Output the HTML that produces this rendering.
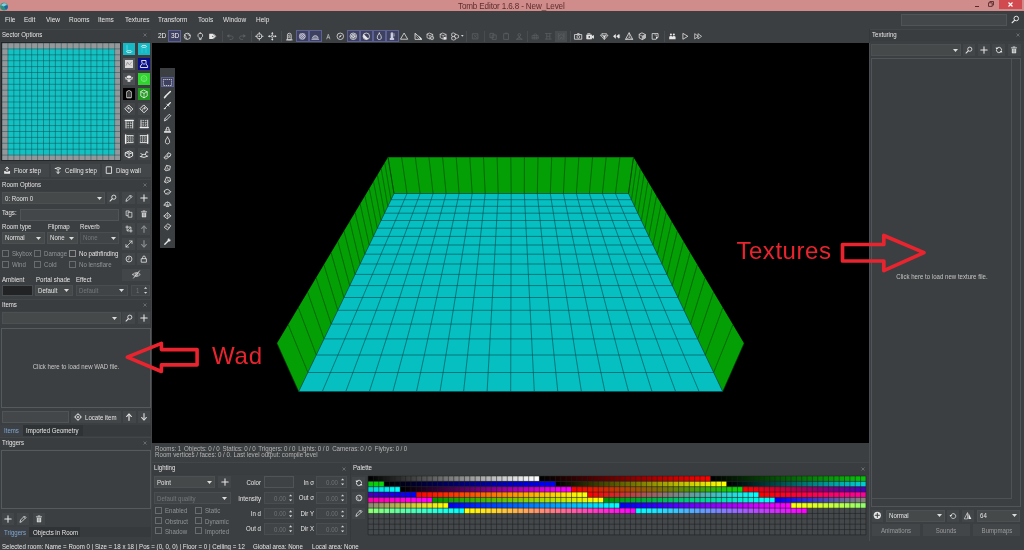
<!DOCTYPE html><html><head><meta charset="utf-8"><title>Tomb Editor</title><style>
*{box-sizing:border-box;margin:0;padding:0}
html,body{width:1024px;height:550px;overflow:hidden;background:#3c3f41;font-family:"Liberation Sans",sans-serif;font-size:6.6px;color:#e4e4e4}
.a{position:absolute}
.t{position:absolute;white-space:nowrap;line-height:1;transform:scaleX(0.925);transform-origin:0 50%}
.tc{transform-origin:50% 50%}
.tr{transform-origin:100% 50%}
.ns{transform:none}
.dis{color:#8c8c8c}
.hdr{position:absolute;background:#3a3d3f;border-top:1px solid #434648;border-bottom:1px solid #393c3e}
.btn{position:absolute;background:#424648;}
.inp{position:absolute;background:#43474a;border:1px solid #505456}
.cmb{position:absolute;background:#45494a;border:1px solid #4c5052}
.inpd{position:absolute;background:#414446;border:1px solid #494d4f}
.lst{position:absolute;background:#3c3f41;border:1px solid #555a5c}
.cb{position:absolute;width:7px;height:7px;border:1px solid #8a8a8a;background:#3c3f41}
.cbd{position:absolute;width:7px;height:7px;border:1px solid #686c6e;background:#3c3f41}
svg{position:absolute;overflow:visible}
#root{position:absolute;left:0;top:0;width:1024px;height:550px;will-change:transform}
</style></head><body><div id="root">
<div class="a" style="left:0px;top:0px;width:1024px;height:11.3px;background:#d08c8b;"></div>
<div class="t " style="left:457.6px;top:1.879174324324325px;font-size:8.76px;color:#5c2c2c;letter-spacing:-0.15px">Tomb Editor 1.6.8 - New_Level</div>
<svg style="left:0;top:1.5px" width="9" height="9" viewBox="0 0 9 9"><circle cx="4" cy="4.6" r="3.8" fill="#2a8f7a"/><path d="M1 3.2A3.8 3.8 0 0 1 7 2.2L4 4.6Z" fill="#7fd0e8"/><path d="M4 4.6L7.6 3.4A3.8 3.8 0 0 1 6 7.8Z" fill="#1f5fa8"/></svg>
<div class="a" style="left:0px;top:11.5px;width:1024px;height:17px;background:#3c3f41;"></div>
<div class="t " style="left:4.6px;top:16.042547297297297px;font-size:7.03px;">File</div>
<div class="t " style="left:24.2px;top:16.042547297297297px;font-size:7.03px;">Edit</div>
<div class="t " style="left:45.5px;top:16.042547297297297px;font-size:7.03px;">View</div>
<div class="t " style="left:68.7px;top:16.042547297297297px;font-size:7.03px;">Rooms</div>
<div class="t " style="left:98.2px;top:16.042547297297297px;font-size:7.03px;">Items</div>
<div class="t " style="left:124.7px;top:16.042547297297297px;font-size:7.03px;">Textures</div>
<div class="t " style="left:158px;top:16.042547297297297px;font-size:7.03px;">Transform</div>
<div class="t " style="left:197.5px;top:16.042547297297297px;font-size:7.03px;">Tools</div>
<div class="t " style="left:223.2px;top:16.042547297297297px;font-size:7.03px;">Window</div>
<div class="t " style="left:256.3px;top:16.042547297297297px;font-size:7.03px;">Help</div>
<div class="a" style="left:152px;top:43.3px;width:716.9px;height:399.3px;background:#000;"></div>
<svg style="left:0;top:0" width="1024" height="550" viewBox="0 0 1024 550">
<polygon points="388.0,157.2 633.5,157.2 628.5,193.5 394.0,193.5" fill="#049f05"/>
<polygon points="277.0,343.3 388.0,157.2 394.0,193.5 298.7,391.5" fill="#049f05"/>
<polygon points="744.0,343.3 633.5,157.2 628.5,193.5 722.7,391.5" fill="#049f05"/>
<polygon points="298.7,391.5 722.7,391.5 628.5,193.5 394.0,193.5" fill="#06bfc1"/>
<path d="M298.7 391.5L722.7 391.5M307.9 372.5L713.6 372.5M316.3 355.0L705.3 355.0M324.0 338.9L697.7 338.9M331.2 324.1L690.6 324.1M337.8 310.3L684.1 310.3M343.9 297.5L678.0 297.5M349.7 285.6L672.3 285.6M355.0 274.4L667.0 274.4M360.1 264.0L662.0 264.0M364.8 254.2L657.4 254.2M369.2 245.0L653.0 245.0M373.4 236.4L648.9 236.4M377.3 228.2L645.0 228.2M381.0 220.5L641.4 220.5M384.5 213.2L637.9 213.2M387.8 206.3L634.6 206.3M391.0 199.7L631.5 199.7M394.0 193.5L628.5 193.5M298.7 391.5L394.0 193.5M322.3 391.5L407.0 193.5M345.8 391.5L420.1 193.5M369.4 391.5L433.1 193.5M392.9 391.5L446.1 193.5M416.5 391.5L459.1 193.5M440.0 391.5L472.2 193.5M463.6 391.5L485.2 193.5M487.1 391.5L498.2 193.5M510.7 391.5L511.2 193.5M534.3 391.5L524.3 193.5M557.8 391.5L537.3 193.5M581.4 391.5L550.3 193.5M604.9 391.5L563.4 193.5M628.5 391.5L576.4 193.5M652.0 391.5L589.4 193.5M675.6 391.5L602.4 193.5M699.1 391.5L615.5 193.5M722.7 391.5L628.5 193.5" stroke="#05484e" stroke-width="0.6" fill="none"/>
<path d="M394.0 193.5L388.0 157.2M407.0 193.5L401.6 157.2M420.1 193.5L415.3 157.2M433.1 193.5L428.9 157.2M446.1 193.5L442.6 157.2M459.1 193.5L456.2 157.2M472.2 193.5L469.8 157.2M485.2 193.5L483.5 157.2M498.2 193.5L497.1 157.2M511.2 193.5L510.8 157.2M524.3 193.5L524.4 157.2M537.3 193.5L538.0 157.2M550.3 193.5L551.7 157.2M563.4 193.5L565.3 157.2M576.4 193.5L578.9 157.2M589.4 193.5L592.6 157.2M602.4 193.5L606.2 157.2M615.5 193.5L619.9 157.2M628.5 193.5L633.5 157.2M298.7 391.5L277.0 343.3M722.7 391.5L744.0 343.3M307.9 372.5L288.2 324.6M713.6 372.5L732.9 324.6M316.3 355.0L298.3 307.5M705.3 355.0L722.8 307.5M324.0 338.9L307.6 292.0M697.7 338.9L713.5 292.0M331.2 324.1L316.1 277.8M690.6 324.1L705.1 277.8M337.8 310.3L323.9 264.7M684.1 310.3L697.3 264.7M343.9 297.5L331.1 252.6M678.0 297.5L690.1 252.6M349.7 285.6L337.8 241.4M672.3 285.6L683.5 241.4M355.0 274.4L344.0 231.0M667.0 274.4L677.3 231.0M360.1 264.0L349.8 221.3M662.0 264.0L671.6 221.3M364.8 254.2L355.1 212.3M657.4 254.2L666.2 212.3M369.2 245.0L360.2 203.9M653.0 245.0L661.2 203.9M373.4 236.4L364.9 195.9M648.9 236.4L656.5 195.9M377.3 228.2L369.3 188.5M645.0 228.2L652.1 188.5M381.0 220.5L373.5 181.5M641.4 220.5L647.9 181.5M384.5 213.2L377.4 174.9M637.9 213.2L644.0 174.9M387.8 206.3L381.2 168.7M634.6 206.3L640.3 168.7M391.0 199.7L384.7 162.8M631.5 199.7L636.8 162.8M394.0 193.5L388.0 157.2M628.5 193.5L633.5 157.2" stroke="#034406" stroke-width="0.6" fill="none"/>
</svg>
<div class="a" style="left:0px;top:29px;width:151px;height:512px;background:#3c3f41;"></div>
<div class="a" style="left:150.8px;top:43px;width:1.2px;height:498px;background:#424547;"></div>
<div class="hdr" style="left:0px;top:29px;width:151px;height:12px"></div>
<div class="t " style="left:2px;top:31.8px;">Sector Options</div>
<svg style="left:143px;top:33.0px" width="4" height="4" viewBox="0 0 4 4"><path d="M0.5 0.5L3.5 3.5M3.5 0.5L0.5 3.5" stroke="#7a7e80" stroke-width="0.7"/></svg>
<div class="a" style="left:1.0px;top:42.2px;width:119.69999999999999px;height:118.5px;background:#232526;"></div>
<svg style="left:1.8px;top:43px;overflow:hidden" width="118.1" height="116.9" viewBox="0 0 118.1 116.9"><rect x="0" y="0" width="118.60" height="118.00" fill="#95989b"/><rect x="5.93" y="5.90" width="106.74" height="106.20" fill="#14c1c2"/><path d="M0.00 0V118.00M0 0.00H118.60M5.93 0V118.00M0 5.90H118.60M11.86 0V118.00M0 11.80H118.60M17.79 0V118.00M0 17.70H118.60M23.72 0V118.00M0 23.60H118.60M29.65 0V118.00M0 29.50H118.60M35.58 0V118.00M0 35.40H118.60M41.51 0V118.00M0 41.30H118.60M47.44 0V118.00M0 47.20H118.60M53.37 0V118.00M0 53.10H118.60M59.30 0V118.00M0 59.00H118.60M65.23 0V118.00M0 64.90H118.60M71.16 0V118.00M0 70.80H118.60M77.09 0V118.00M0 76.70H118.60M83.02 0V118.00M0 82.60H118.60M88.95 0V118.00M0 88.50H118.60M94.88 0V118.00M0 94.40H118.60M100.81 0V118.00M0 100.30H118.60M106.74 0V118.00M0 106.20H118.60M112.67 0V118.00M0 112.10H118.60M118.60 0V118.00M0 118.00H118.60" stroke="#0c3c42" stroke-width="0.5" fill="none" opacity="0.85"/></svg>
<div class="a" style="left:123px;top:43px;width:12px;height:12px;background:#17b9c4;"></div>
<div class="a" style="left:138px;top:43px;width:12px;height:12px;background:#17b9c4;"></div>
<div class="a" style="left:123px;top:58px;width:12px;height:12px;background:#55595b;"></div>
<div class="a" style="left:138px;top:58px;width:12px;height:12px;background:#0a0f8c;"></div>
<div class="a" style="left:123px;top:73.2px;width:12px;height:12px;background:#4c5052;"></div>
<div class="a" style="left:138px;top:73.2px;width:12px;height:12px;background:#2fd42f;"></div>
<div class="a" style="left:123px;top:88px;width:12px;height:12px;background:#000;"></div>
<div class="a" style="left:138px;top:88px;width:12px;height:12px;background:#1f9a1f;"></div>
<div class="a" style="left:123px;top:103px;width:12px;height:12px;background:#424648;"></div>
<div class="a" style="left:138px;top:103px;width:12px;height:12px;background:#424648;"></div>
<div class="a" style="left:123px;top:118px;width:12px;height:12px;background:#424648;"></div>
<div class="a" style="left:138px;top:118px;width:12px;height:12px;background:#424648;"></div>
<div class="a" style="left:123px;top:133px;width:12px;height:12px;background:#424648;"></div>
<div class="a" style="left:138px;top:133px;width:12px;height:12px;background:#424648;"></div>
<div class="a" style="left:123px;top:148px;width:12px;height:12px;background:#424648;"></div>
<div class="a" style="left:138px;top:148px;width:12px;height:12px;background:#424648;"></div>
<svg style="left:123px;top:43px" width="12" height="12" viewBox="0 0 12 12"><path d="M4 2.2V8.4" stroke="#8eeef4" stroke-width="0.55" fill="none" stroke-linecap="round" stroke-linejoin="round"/><ellipse cx="6.2" cy="8.6" rx="2.6" ry="1" stroke="#f0f0f0" stroke-width="0.8" fill="none"/></svg>
<svg style="left:138px;top:43px" width="12" height="12" viewBox="0 0 12 12"><ellipse cx="6" cy="3.4" rx="2.6" ry="1" stroke="#f0f0f0" stroke-width="0.8" fill="none"/><path d="M4 4.6V9.4M8 4.6V9.4" stroke="#55dde8" stroke-width="0.45" fill="none" stroke-linecap="round" stroke-linejoin="round"/></svg>
<svg style="left:123px;top:58px" width="12" height="12" viewBox="0 0 12 12"><rect x="2" y="2" width="8" height="8" fill="#dadada"/><path d="M3 7.5L4.6 4.2L6.4 6.8L8.6 4" stroke="#777" stroke-width="0.55" fill="none" stroke-linecap="round" stroke-linejoin="round"/><path d="M3 5L8.6 7.6" stroke="#999" stroke-width="0.4" fill="none" stroke-linecap="round" stroke-linejoin="round"/></svg>
<svg style="left:138px;top:58px" width="12" height="12" viewBox="0 0 12 12"><path d="M4 2.5H8V6L9.6 8V9.5H2.4V8L4 6Z" stroke="#f0f0f0" stroke-width="0.9" fill="none" stroke-linecap="round" stroke-linejoin="round"/><path d="M5.3 6.5L6 5.2L6.7 6.5" stroke="#f0f0f0" stroke-width="0.6" fill="none" stroke-linecap="round" stroke-linejoin="round"/></svg>
<svg style="left:123px;top:73.2px" width="12" height="12" viewBox="0 0 12 12"><path d="M6 2.4C3.6 2.4 3.2 4.4 3.6 6L4.6 7V8.8H7.4V7L8.4 6C8.8 4.4 8.4 2.4 6 2.4Z" fill="#f0f0f0"/><circle cx="4.9" cy="5.4" r="0.75" fill="#4c5052"/><circle cx="7.1" cy="5.4" r="0.75" fill="#4c5052"/><path d="M6 6.4V7.2" stroke="#4c5052" stroke-width="0.5" fill="none" stroke-linecap="round" stroke-linejoin="round"/><path d="M2.4 4.4L3.2 6.6M9.6 4.4L8.8 6.6" stroke="#f0f0f0" stroke-width="0.7" fill="none" stroke-linecap="round" stroke-linejoin="round"/></svg>
<svg style="left:138px;top:73.2px" width="12" height="12" viewBox="0 0 12 12"><circle cx="6" cy="5.6" r="2.9" stroke="#8ff08f" stroke-width="0.7" fill="none"/><path d="M4.6 5.2Q6 3.8 7.4 5.2M5 7Q6 7.8 7 7" stroke="#8ff08f" stroke-width="0.5" fill="none" stroke-linecap="round" stroke-linejoin="round"/></svg>
<svg style="left:123px;top:88px" width="12" height="12" viewBox="0 0 12 12"><path d="M3.8 9.4V3.6Q6 1.6 8.2 3.6V9.4Z" stroke="#f0f0f0" stroke-width="0.9" fill="none" stroke-linecap="round" stroke-linejoin="round"/><path d="M6 4.5V9.2" stroke="#f0f0f0" stroke-width="0.6" fill="none" stroke-linecap="round" stroke-linejoin="round"/></svg>
<svg style="left:138px;top:88px" width="12" height="12" viewBox="0 0 12 12"><path d="M6 2.2L9.2 3.8V8L6 9.8L2.8 8V3.8Z" stroke="#f0f0f0" stroke-width="0.8" fill="none" stroke-linecap="round" stroke-linejoin="round"/><path d="M2.8 3.8L6 5.4L9.2 3.8M6 5.4V9.8" stroke="#f0f0f0" stroke-width="0.7" fill="none" stroke-linecap="round" stroke-linejoin="round"/></svg>
<svg style="left:123px;top:103px" width="12" height="12" viewBox="0 0 12 12"><path d="M6 2.2L9.8 6L6 9.8L2.2 6Z" stroke="#f0f0f0" stroke-width="0.9" fill="none" stroke-linecap="round" stroke-linejoin="round"/><path d="M7.3 7.2V6.2Q7.3 5.2 6.3 5.2H4.9M5.7 4.3L4.7 5.2L5.7 6.1" stroke="#f0f0f0" stroke-width="0.75" fill="none" stroke-linecap="round" stroke-linejoin="round"/></svg>
<svg style="left:138px;top:103px" width="12" height="12" viewBox="0 0 12 12"><path d="M6 2.2L9.8 6L6 9.8L2.2 6Z" stroke="#f0f0f0" stroke-width="0.9" fill="none" stroke-linecap="round" stroke-linejoin="round"/><path d="M4.7 7.2V6.2Q4.7 5.2 5.7 5.2H7.1M6.3 4.3L7.3 5.2L6.3 6.1" stroke="#f0f0f0" stroke-width="0.75" fill="none" stroke-linecap="round" stroke-linejoin="round"/></svg>
<svg style="left:123px;top:118px" width="12" height="12" viewBox="0 0 12 12"><path d="M2.4 2.5H10.2" stroke="#f0f0f0" stroke-width="1.5" fill="none" stroke-linecap="round" stroke-linejoin="round"/><path d="M3 3.8V10M9.7 3.8V10" stroke="#f0f0f0" stroke-width="0.9" fill="none" stroke-linecap="round" stroke-linejoin="round"/><path d="M5.2 3.8V10M7.5 3.8V10M3.6 5.4H9.2M3.6 7.6H9.2M3.6 9.8H9.2" stroke="#e4e4e4" stroke-width="0.7" fill="none" stroke-dasharray="0.9 0.7"/></svg>
<svg style="left:138px;top:118px" width="12" height="12" viewBox="0 0 12 12"><path d="M2.4 9.6H10.2" stroke="#f0f0f0" stroke-width="1.5" fill="none" stroke-linecap="round" stroke-linejoin="round"/><path d="M3 2.2V8.4M9.7 2.2V8.4" stroke="#f0f0f0" stroke-width="0.9" fill="none" stroke-linecap="round" stroke-linejoin="round"/><path d="M5.2 2.2V8.4M7.5 2.2V8.4M3.6 2.4H9.2M3.6 4.6H9.2M3.6 6.8H9.2" stroke="#e4e4e4" stroke-width="0.7" fill="none" stroke-dasharray="0.9 0.7"/></svg>
<svg style="left:123px;top:133px" width="12" height="12" viewBox="0 0 12 12"><path d="M2.7 2V10.2" stroke="#f0f0f0" stroke-width="1.5" fill="none" stroke-linecap="round" stroke-linejoin="round"/><path d="M4 2.6H10.2M4 9.6H10.2" stroke="#f0f0f0" stroke-width="0.9" fill="none" stroke-linecap="round" stroke-linejoin="round"/><path d="M5.6 3.2V9M7.8 3.2V9M10 3.2V9M4 4.9H10M4 7.2H10" stroke="#e4e4e4" stroke-width="0.7" fill="none" stroke-dasharray="0.9 0.7"/></svg>
<svg style="left:138px;top:133px" width="12" height="12" viewBox="0 0 12 12"><path d="M9.6 2V10.2" stroke="#f0f0f0" stroke-width="1.5" fill="none" stroke-linecap="round" stroke-linejoin="round"/><path d="M2.2 2.6H8.4M2.2 9.6H8.4" stroke="#f0f0f0" stroke-width="0.9" fill="none" stroke-linecap="round" stroke-linejoin="round"/><path d="M2.4 3.2V9M4.6 3.2V9M6.8 3.2V9M2.4 4.9H8.4M2.4 7.2H8.4" stroke="#e4e4e4" stroke-width="0.7" fill="none" stroke-dasharray="0.9 0.7"/></svg>
<svg style="left:123px;top:148px" width="12" height="12" viewBox="0 0 12 12"><path d="M2.6 4.6L6.4 3L9.6 4.6V8L6 9.8L2.6 8Z" stroke="#f0f0f0" stroke-width="0.9" fill="none" stroke-linecap="round" stroke-linejoin="round"/><path d="M2.6 4.6L6 6.2L9.6 4.6M6 6.2V9.8" stroke="#f0f0f0" stroke-width="0.8" fill="none" stroke-linecap="round" stroke-linejoin="round"/><path d="M4.4 3.8L7.8 5.4" stroke="#f0f0f0" stroke-width="0.7" fill="none" stroke-linecap="round" stroke-linejoin="round"/></svg>
<svg style="left:138px;top:148px" width="12" height="12" viewBox="0 0 12 12"><path d="M2.2 8.6Q6 10.6 9.8 8.2" stroke="#f0f0f0" stroke-width="0.9" fill="none" stroke-linecap="round" stroke-linejoin="round"/><path d="M3.6 8.4L4.4 6.4H7.4L8.6 8" stroke="#f0f0f0" stroke-width="0.8" fill="none" stroke-linecap="round" stroke-linejoin="round"/><path d="M7.4 6.4L8.4 3.6L9.8 4.2" stroke="#f0f0f0" stroke-width="0.9" fill="none" stroke-linecap="round" stroke-linejoin="round"/><path d="M4.4 6.4L2.8 5.6" stroke="#f0f0f0" stroke-width="0.8" fill="none" stroke-linecap="round" stroke-linejoin="round"/></svg>
<div class="btn" style="left:0px;top:163.5px;width:48.5px;height:13px;background:#424648"></div>
<svg style="left:3.4px;top:165.8px" width="8.2" height="8.2" viewBox="0 0 10 10"><path d="M1.4 6.2H3.4V7.4H6.6V6.2H8.6V9.4H1.4Z" fill="#e6e6e6"/><path d="M5 6.4V1.6" stroke="#e6e6e6" stroke-width="1.2" fill="none" stroke-linecap="round" stroke-linejoin="round"/><path d="M3.2 3.2L5 1.2L6.8 3.2" stroke="#e6e6e6" stroke-width="1.1" fill="none" stroke-linecap="round" stroke-linejoin="round"/></svg>
<div class="t " style="left:13.8px;top:167.9px;">Floor step</div>
<div class="btn" style="left:51px;top:163.5px;width:48.5px;height:13px;background:#424648"></div>
<svg style="left:54.4px;top:165.8px" width="8.2" height="8.2" viewBox="0 0 10 10"><path d="M1.6 3Q5 0.4 8.4 3Q5 5.4 1.6 3Z" stroke="#e6e6e6" stroke-width="1.0" fill="none" stroke-linecap="round" stroke-linejoin="round"/><path d="M5 4.8V8.8" stroke="#e6e6e6" stroke-width="1.2" fill="none" stroke-linecap="round" stroke-linejoin="round"/><path d="M3.2 7.2L5 9.2L6.8 7.2" stroke="#e6e6e6" stroke-width="1.1" fill="none" stroke-linecap="round" stroke-linejoin="round"/></svg>
<div class="t " style="left:64.8px;top:167.9px;">Ceiling step</div>
<div class="btn" style="left:102px;top:163.5px;width:48.5px;height:13px;background:#424648"></div>
<svg style="left:105.4px;top:165.8px" width="8.2" height="8.2" viewBox="0 0 10 10"><path d="M2 1H8V9H2Z" stroke="#e6e6e6" stroke-width="1.1" fill="none" stroke-linecap="round" stroke-linejoin="round"/></svg>
<div class="t " style="left:115.8px;top:167.9px;">Diag wall</div>
<div class="hdr" style="left:0px;top:179px;width:151px;height:11.5px"></div>
<div class="t " style="left:2px;top:181.55px;">Room Options</div>
<svg style="left:143px;top:182.75px" width="4" height="4" viewBox="0 0 4 4"><path d="M0.5 0.5L3.5 3.5M3.5 0.5L0.5 3.5" stroke="#7a7e80" stroke-width="0.7"/></svg>
<div class="cmb" style="left:2px;top:192.2px;width:103px;height:12.2px"></div>
<div class="t " style="left:5px;top:196.0px;">0: Room 0</div>
<svg style="left:96.5px;top:197.1px" width="5" height="3" viewBox="0 0 5 3"><path d="M0 0H5L2.5 3Z" fill="#dcdcdc"/></svg>
<div class="btn" style="left:107px;top:192.2px;width:12px;height:12.2px;background:#424648"></div>
<svg style="left:109.0px;top:194.29999999999998px" width="8" height="8" viewBox="0 0 10 10"><circle cx="6" cy="4" r="2.6" stroke="#e6e6e6" stroke-width="1.1" fill="none"/><path d="M4 6L1.3 8.8" stroke="#e6e6e6" stroke-width="1.3" fill="none" stroke-linecap="round" stroke-linejoin="round"/></svg>
<div class="btn" style="left:122px;top:192.2px;width:13px;height:12.2px;background:#424648"></div>
<svg style="left:124.5px;top:194.29999999999998px" width="8" height="8" viewBox="0 0 10 10"><path d="M1.3 8.7L2 6.2L6.9 1.3L8.7 3.1L3.8 8Z" stroke="#e6e6e6" stroke-width="1.0" fill="none" stroke-linecap="round" stroke-linejoin="round"/><path d="M5.9 2.3L7.7 4.1" stroke="#e6e6e6" stroke-width="0.8" fill="none" stroke-linecap="round" stroke-linejoin="round"/></svg>
<div class="btn" style="left:137px;top:192.2px;width:13px;height:12.2px;background:#424648"></div>
<svg style="left:139.5px;top:194.29999999999998px" width="8" height="8" viewBox="0 0 10 10"><path d="M5 1V9M1 5H9" stroke="#e6e6e6" stroke-width="1.3" fill="none" stroke-linecap="round" stroke-linejoin="round"/></svg>
<div class="t " style="left:1.5px;top:210.3px;">Tags:</div>
<div class="inp" style="left:20px;top:208.8px;width:99px;height:12.2px"></div>
<div class="btn" style="left:122px;top:208px;width:13px;height:12px;background:#424648"></div>
<svg style="left:124.5px;top:210.0px" width="8" height="8" viewBox="0 0 10 10"><path d="M1.4 1.2H5.2V7H1.4Z" stroke="#e6e6e6" stroke-width="0.9" fill="none"/><path d="M3.9 2.9H8.6V9H3.9Z" stroke="#e6e6e6" stroke-width="0.9" fill="#424648"/></svg>
<div class="btn" style="left:137px;top:208px;width:13px;height:12px;background:#424648"></div>
<svg style="left:139.5px;top:210.0px" width="8" height="8" viewBox="0 0 10 10"><path d="M2.3 3.3H7.7V8.4Q7.7 9.2 6.9 9.2H3.1Q2.3 9.2 2.3 8.4Z" fill="#e6e6e6"/><path d="M1.7 2.3H8.3" stroke="#e6e6e6" stroke-width="1.0" fill="none" stroke-linecap="round" stroke-linejoin="round"/><path d="M3.9 1.2H6.1" stroke="#e6e6e6" stroke-width="1.0" fill="none" stroke-linecap="round" stroke-linejoin="round"/><path d="M4 4.4V7.8M6 4.4V7.8" stroke="#45494a" stroke-width="0.7" fill="none" stroke-linecap="round" stroke-linejoin="round"/></svg>
<div class="t " style="left:1.5px;top:224.4px;">Room type</div>
<div class="t " style="left:47.5px;top:224.4px;">Flipmap</div>
<div class="t " style="left:80px;top:224.4px;">Reverb</div>
<div class="cmb" style="left:2px;top:232px;width:42.5px;height:11.5px"></div>
<div class="t " style="left:5px;top:235.45000000000002px;">Normal</div>
<svg style="left:36.0px;top:236.55px" width="5" height="3" viewBox="0 0 5 3"><path d="M0 0H5L2.5 3Z" fill="#dcdcdc"/></svg>
<div class="cmb" style="left:47px;top:232px;width:30.5px;height:11.5px"></div>
<div class="t " style="left:50px;top:235.45000000000002px;">None</div>
<svg style="left:69.0px;top:236.55px" width="5" height="3" viewBox="0 0 5 3"><path d="M0 0H5L2.5 3Z" fill="#dcdcdc"/></svg>
<div class="inpd" style="left:80px;top:232px;width:39px;height:11.5px"></div>
<div class="t " style="left:83px;top:235.45000000000002px;color:#74787a;">None</div>
<svg style="left:110.5px;top:236.55px" width="5" height="3" viewBox="0 0 5 3"><path d="M0 0H5L2.5 3Z" fill="#dcdcdc"/></svg>
<div class="btn" style="left:122px;top:223px;width:13px;height:12px;background:#424648"></div>
<svg style="left:124.5px;top:225.0px" width="8" height="8" viewBox="0 0 10 10"><path d="M2.6 0.6V7.4H9.4M0.6 2.6H7.4V9.4" stroke="#e6e6e6" stroke-width="1" fill="none"/><path d="M3.4 6.6L6.6 3.4" stroke="#e6e6e6" stroke-width="0.8" fill="none" stroke-linecap="round" stroke-linejoin="round"/></svg>
<div class="btn" style="left:137px;top:223px;width:13px;height:12px;background:#424648"></div>
<svg style="left:139.5px;top:225.0px" width="8" height="8" viewBox="0 0 10 10"><path d="M5 9.2V1.8" stroke="#8a8e90" stroke-width="1.5" fill="none" stroke-linecap="round" stroke-linejoin="round"/><path d="M2 4.4L5 1.2L8 4.4" stroke="#8a8e90" stroke-width="1.3" fill="none" stroke-linecap="round" stroke-linejoin="round"/></svg>
<div class="btn" style="left:122px;top:238px;width:13px;height:12px;background:#424648"></div>
<svg style="left:124.5px;top:240.0px" width="8" height="8" viewBox="0 0 10 10"><path d="M1.3 8.7L8.7 1.3M5.6 1.2H8.8V4.4M1.2 5.6V8.8H4.4" stroke="#e6e6e6" stroke-width="0.9" fill="none" stroke-linecap="round" stroke-linejoin="round"/></svg>
<div class="btn" style="left:137px;top:238px;width:13px;height:12px;background:#424648"></div>
<svg style="left:139.5px;top:240.0px" width="8" height="8" viewBox="0 0 10 10"><path d="M5 0.8V8.2" stroke="#8a8e90" stroke-width="1.5" fill="none" stroke-linecap="round" stroke-linejoin="round"/><path d="M2 5.6L5 8.8L8 5.6" stroke="#8a8e90" stroke-width="1.3" fill="none" stroke-linecap="round" stroke-linejoin="round"/></svg>
<div class="cbd" style="left:1.5px;top:250px"></div>
<div class="t " style="left:11.5px;top:251.4px;color:#909496;">Skybox</div>
<div class="cbd" style="left:34px;top:250px"></div>
<div class="t " style="left:44px;top:251.4px;color:#909496;">Damage</div>
<div class="cb" style="left:68.5px;top:250px"></div>
<div class="t " style="left:78.5px;top:251.4px;">No pathfinding</div>
<div class="cbd" style="left:1.5px;top:261px"></div>
<div class="t " style="left:11.5px;top:262.4px;color:#909496;">Wind</div>
<div class="cbd" style="left:34px;top:261px"></div>
<div class="t " style="left:44px;top:262.4px;color:#909496;">Cold</div>
<div class="cbd" style="left:68.5px;top:261px"></div>
<div class="t " style="left:78.5px;top:262.4px;color:#909496;">No lensflare</div>
<div class="btn" style="left:122px;top:253px;width:13px;height:12px;background:#424648"></div>
<svg style="left:124.5px;top:255.0px" width="8" height="8" viewBox="0 0 10 10"><circle cx="5" cy="5" r="3.7" stroke="#e6e6e6" stroke-width="1" fill="none"/><path d="M5 2.8V5.2L3.4 6" stroke="#e6e6e6" stroke-width="0.8" fill="none" stroke-linecap="round" stroke-linejoin="round"/></svg>
<div class="btn" style="left:137px;top:253px;width:13px;height:12px;background:#424648"></div>
<svg style="left:139.5px;top:255.0px" width="8" height="8" viewBox="0 0 10 10"><path d="M2 4.6H8V9H2Z" stroke="#e6e6e6" stroke-width="1.0" fill="none" stroke-linecap="round" stroke-linejoin="round"/><path d="M3.3 4.4V3A1.7 1.7 0 0 1 6.7 3V4.4" stroke="#e6e6e6" stroke-width="1.0" fill="none" stroke-linecap="round" stroke-linejoin="round"/></svg>
<div class="btn" style="left:122px;top:269px;width:28px;height:11.5px;background:#424648"></div>
<svg style="left:131.5px;top:270.25px" width="9" height="9" viewBox="0 0 10 10"><path d="M0.8 5Q5 0.6 9.2 5Q5 9.4 0.8 5Z" stroke="#e6e6e6" stroke-width="0.8" fill="none" stroke-linecap="round" stroke-linejoin="round"/><circle cx="5" cy="5" r="1.4" stroke="#e6e6e6" stroke-width="0.8" fill="none"/><path d="M8.3 1L1.7 9" stroke="#e6e6e6" stroke-width="0.9" fill="none" stroke-linecap="round" stroke-linejoin="round"/></svg>
<div class="t " style="left:1.5px;top:277.4px;">Ambient</div>
<div class="t " style="left:35.5px;top:277.4px;">Portal shade</div>
<div class="t " style="left:76px;top:277.4px;">Effect</div>
<div class="a" style="left:2px;top:285px;width:30.5px;height:11px;background:#222324;border:1px solid #4a4d4f"></div>
<div class="cmb" style="left:35px;top:284.6px;width:37.5px;height:11.8px"></div>
<div class="t " style="left:38px;top:288.2px;">Default</div>
<svg style="left:64.0px;top:289.3px" width="5" height="3" viewBox="0 0 5 3"><path d="M0 0H5L2.5 3Z" fill="#dcdcdc"/></svg>
<div class="inpd" style="left:76px;top:284.6px;width:51.5px;height:11.8px"></div>
<div class="t " style="left:79px;top:288.2px;color:#74787a;">Default</div>
<svg style="left:119.0px;top:289.3px" width="5" height="3" viewBox="0 0 5 3"><path d="M0 0H5L2.5 3Z" fill="#dcdcdc"/></svg>
<div class="inpd" style="left:131px;top:284.6px;width:19px;height:11.8px"></div>
<div class="t " style="left:136px;top:288.2px;color:#6f7375;">1</div>
<svg style="left:143.8px;top:287.2px" width="3.2" height="6.8" viewBox="0 0 3.2 6.8"><path d="M0 1.8L1.6 0L3.2 1.8ZM0 5L1.6 6.8L3.2 5Z" fill="#d8d8d8"/></svg>
<div class="hdr" style="left:0px;top:299px;width:151px;height:11.5px"></div>
<div class="t " style="left:2px;top:301.55px;">Items</div>
<svg style="left:143px;top:302.75px" width="4" height="4" viewBox="0 0 4 4"><path d="M0.5 0.5L3.5 3.5M3.5 0.5L0.5 3.5" stroke="#7a7e80" stroke-width="0.7"/></svg>
<div class="cmb" style="left:2px;top:312.2px;width:118.5px;height:12px"></div>
<svg style="left:112.0px;top:317.0px" width="5" height="3" viewBox="0 0 5 3"><path d="M0 0H5L2.5 3Z" fill="#dcdcdc"/></svg>
<div class="btn" style="left:122.4px;top:312.2px;width:12.4px;height:12px;background:#424648"></div>
<svg style="left:124.60000000000001px;top:314.2px" width="8" height="8" viewBox="0 0 10 10"><circle cx="6" cy="4" r="2.6" stroke="#e6e6e6" stroke-width="1.1" fill="none"/><path d="M4 6L1.3 8.8" stroke="#e6e6e6" stroke-width="1.3" fill="none" stroke-linecap="round" stroke-linejoin="round"/></svg>
<div class="btn" style="left:137.6px;top:312.2px;width:12.6px;height:12px;background:#424648"></div>
<svg style="left:139.9px;top:314.2px" width="8" height="8" viewBox="0 0 10 10"><path d="M5 1V9M1 5H9" stroke="#e6e6e6" stroke-width="1.3" fill="none" stroke-linecap="round" stroke-linejoin="round"/></svg>
<div class="lst" style="left:1px;top:327.5px;width:149.5px;height:80px"></div>
<div class="t  tc" style="left:-23.799999999999997px;top:363.7583905405405px;width:200px;text-align:center;font-size:6.59px;color:#c8c8c8;">Click here to load new WAD file.</div>
<div class="inp" style="left:1.5px;top:411px;width:67px;height:11.5px"></div>
<div class="btn" style="left:71px;top:411px;width:49.5px;height:11.5px;background:#424648"></div>
<svg style="left:74px;top:412.7px" width="8" height="8" viewBox="0 0 10 10"><circle cx="5" cy="5" r="3.2" stroke="#e6e6e6" stroke-width="1" fill="none"/><circle cx="5" cy="5" r="1.1" fill="#e6e6e6"/><path d="M5 0.4V2M5 8V9.6M0.4 5H2M8 5H9.6" stroke="#e6e6e6" stroke-width="0.9" fill="none" stroke-linecap="round" stroke-linejoin="round"/></svg>
<div class="t " style="left:84.5px;top:414.59999999999997px;">Locate item</div>
<div class="btn" style="left:123px;top:411px;width:12.5px;height:11.5px;background:#424648"></div>
<svg style="left:125.25px;top:412.75px" width="8" height="8" viewBox="0 0 10 10"><path d="M5 9.2V1.8" stroke="#e6e6e6" stroke-width="1.5" fill="none" stroke-linecap="round" stroke-linejoin="round"/><path d="M2 4.4L5 1.2L8 4.4" stroke="#e6e6e6" stroke-width="1.3" fill="none" stroke-linecap="round" stroke-linejoin="round"/></svg>
<div class="btn" style="left:137.5px;top:411px;width:12.5px;height:11.5px;background:#424648"></div>
<svg style="left:139.75px;top:412.75px" width="8" height="8" viewBox="0 0 10 10"><path d="M5 0.8V8.2" stroke="#d4d4d4" stroke-width="1.5" fill="none" stroke-linecap="round" stroke-linejoin="round"/><path d="M2 5.6L5 8.8L8 5.6" stroke="#d4d4d4" stroke-width="1.3" fill="none" stroke-linecap="round" stroke-linejoin="round"/></svg>
<div class="a" style="left:0px;top:425.4px;width:151px;height:11px;background:#373a3c;"></div>
<div class="a" style="left:0px;top:425.4px;width:22.5px;height:11px;background:#3d4045;"></div>
<div class="a" style="left:22.5px;top:425.4px;width:60px;height:11px;background:#303335;"></div>
<div class="t " style="left:3.5px;top:428.09999999999997px;color:#7ea7d0;">Items</div>
<div class="t " style="left:26px;top:428.09999999999997px;">Imported Geometry</div>
<div class="hdr" style="left:0px;top:437px;width:151px;height:11.5px"></div>
<div class="t " style="left:2px;top:439.55px;">Triggers</div>
<svg style="left:143px;top:440.75px" width="4" height="4" viewBox="0 0 4 4"><path d="M0.5 0.5L3.5 3.5M3.5 0.5L0.5 3.5" stroke="#7a7e80" stroke-width="0.7"/></svg>
<div class="lst" style="left:1px;top:450px;width:149.5px;height:59px"></div>
<div class="btn" style="left:1.5px;top:513px;width:12.5px;height:12px;background:#424648"></div>
<svg style="left:3.75px;top:515.0px" width="8" height="8" viewBox="0 0 10 10"><path d="M5 1V9M1 5H9" stroke="#e6e6e6" stroke-width="1.3" fill="none" stroke-linecap="round" stroke-linejoin="round"/></svg>
<div class="btn" style="left:16.5px;top:513px;width:12.5px;height:12px;background:#424648"></div>
<svg style="left:18.75px;top:515.0px" width="8" height="8" viewBox="0 0 10 10"><path d="M1.3 8.7L2 6.2L6.9 1.3L8.7 3.1L3.8 8Z" stroke="#e6e6e6" stroke-width="1.0" fill="none" stroke-linecap="round" stroke-linejoin="round"/><path d="M5.9 2.3L7.7 4.1" stroke="#e6e6e6" stroke-width="0.8" fill="none" stroke-linecap="round" stroke-linejoin="round"/></svg>
<div class="btn" style="left:32.5px;top:513px;width:12.5px;height:12px;background:#424648"></div>
<svg style="left:34.75px;top:515.0px" width="8" height="8" viewBox="0 0 10 10"><path d="M2.3 3.3H7.7V8.4Q7.7 9.2 6.9 9.2H3.1Q2.3 9.2 2.3 8.4Z" fill="#e6e6e6"/><path d="M1.7 2.3H8.3" stroke="#e6e6e6" stroke-width="1.0" fill="none" stroke-linecap="round" stroke-linejoin="round"/><path d="M3.9 1.2H6.1" stroke="#e6e6e6" stroke-width="1.0" fill="none" stroke-linecap="round" stroke-linejoin="round"/><path d="M4 4.4V7.8M6 4.4V7.8" stroke="#45494a" stroke-width="0.7" fill="none" stroke-linecap="round" stroke-linejoin="round"/></svg>
<div class="a" style="left:0px;top:527.4px;width:151px;height:9.2px;background:#373a3c;"></div>
<div class="a" style="left:0px;top:527.4px;width:29px;height:9.2px;background:#3d4045;"></div>
<div class="a" style="left:29px;top:527.4px;width:51px;height:9.2px;background:#303335;"></div>
<div class="t " style="left:3.5px;top:529.5px;color:#7ea7d0;">Triggers</div>
<div class="t " style="left:32.5px;top:529.5px;">Objects in Room</div>
<div class="a" style="left:152px;top:29px;width:717px;height:14px;background:#3c3f41;"></div>
<div class="t " style="left:157.5px;top:32.93858648648649px;font-size:7.14px;color:#f0f0f0;letter-spacing:-0.3px">2D</div>
<div class="a" style="left:168.1px;top:30px;width:13.2px;height:11.9px;background:#3d405e;border:1px solid #5d6192"></div>
<div class="t " style="left:170.6px;top:32.93858648648649px;font-size:7.14px;color:#f0f0f0;letter-spacing:-0.3px">3D</div>
<svg style="left:183.0px;top:32.1px" width="8.6" height="8.6" viewBox="0 0 10 10"><circle cx="5" cy="5" r="3.6" stroke="#e8e8e8" stroke-width="0.9" fill="none"/><path d="M2.2 3.4Q4 4.6 3.4 6.2L4.6 8.2M6 1.8Q5.2 3.4 7 4.2L8.4 4" stroke="#e8e8e8" stroke-width="0.8" fill="none" stroke-linecap="round" stroke-linejoin="round"/></svg>
<svg style="left:195.7px;top:32.1px" width="8.6" height="8.6" viewBox="0 0 10 10"><path d="M5 1.2A2.8 2.8 0 0 0 3.6 6.4V7.4H6.4V6.4A2.8 2.8 0 0 0 5 1.2Z" stroke="#e8e8e8" stroke-width="0.9" fill="none" stroke-linecap="round" stroke-linejoin="round"/><path d="M4.2 8.8H5.8" stroke="#e8e8e8" stroke-width="0.9" fill="none" stroke-linecap="round" stroke-linejoin="round"/></svg>
<svg style="left:208.1px;top:32.1px" width="8.6" height="8.6" viewBox="0 0 10 10"><path d="M1.4 2H5.4L8.6 5L5.4 8H1.4Z" fill="#e8e8e8"/><path d="M6.6 2.4L9.2 5L6.6 7.6" stroke="#e8e8e8" stroke-width="0.8" fill="none" stroke-linecap="round" stroke-linejoin="round"/><circle cx="5.6" cy="5" r="0.7" stroke="#3c3f41" stroke-width="0" fill="#3c3f41"/></svg>
<div class="a" style="left:221.8px;top:31px;width:0.8px;height:11px;background:#484c4e;"></div>
<svg style="left:225.7px;top:32.1px" width="8.6" height="8.6" viewBox="0 0 10 10"><path d="M2 4.6H6.2A2 2 0 0 1 6.2 8.6H4.6" stroke="#5c6062" stroke-width="1" fill="none" stroke-linecap="round" stroke-linejoin="round"/><path d="M3.8 2.4L1 4.6L3.8 6.8Z" fill="#5c6062"/></svg>
<svg style="left:238.39999999999998px;top:32.1px" width="8.6" height="8.6" viewBox="0 0 10 10"><path d="M8 4.6H3.8A2 2 0 0 0 3.8 8.6H5.4" stroke="#5c6062" stroke-width="1" fill="none" stroke-linecap="round" stroke-linejoin="round"/><path d="M6.2 2.4L9 4.6L6.2 6.8Z" fill="#5c6062"/></svg>
<div class="a" style="left:250.5px;top:31px;width:0.8px;height:11px;background:#484c4e;"></div>
<svg style="left:254.89999999999998px;top:32.1px" width="8.6" height="8.6" viewBox="0 0 10 10"><circle cx="5" cy="5" r="3" stroke="#e8e8e8" stroke-width="0.9" fill="none"/><circle cx="5" cy="5" r="0.9" stroke="#e8e8e8" stroke-width="0" fill="#e8e8e8"/><path d="M5 0.6V2.4M5 7.6V9.4M0.6 5H2.4M7.6 5H9.4" stroke="#e8e8e8" stroke-width="0.9" fill="none" stroke-linecap="round" stroke-linejoin="round"/></svg>
<svg style="left:268.09999999999997px;top:32.1px" width="8.6" height="8.6" viewBox="0 0 10 10"><path d="M5 0.8V9.2M0.8 5H9.2" stroke="#e8e8e8" stroke-width="0.8" fill="none" stroke-linecap="round" stroke-linejoin="round"/><path d="M5 0.2L6.4 2H3.6ZM5 9.8L6.4 8H3.6ZM0.2 5L2 3.6V6.4ZM9.8 5L8 3.6V6.4Z" fill="#e8e8e8"/><circle cx="5" cy="5" r="1.3" stroke="#e8e8e8" stroke-width="0.7" fill="#3c3f41"/></svg>
<div class="a" style="left:280.8px;top:31px;width:0.8px;height:11px;background:#484c4e;"></div>
<svg style="left:284.59999999999997px;top:32.1px" width="8.6" height="8.6" viewBox="0 0 10 10"><path d="M2.8 8.6V3.6A2.2 2.2 0 0 1 7.2 3.6V8.6Z" stroke="#e8e8e8" stroke-width="0.9" fill="none" stroke-linecap="round" stroke-linejoin="round"/><path d="M1.6 9.2H8.4" stroke="#e8e8e8" stroke-width="0.9" fill="none" stroke-linecap="round" stroke-linejoin="round"/><circle cx="5" cy="4.4" r="0.9" stroke="#e8e8e8" stroke-width="0.7" fill="none"/><path d="M4 6.6H6" stroke="#e8e8e8" stroke-width="0.7" fill="none" stroke-linecap="round" stroke-linejoin="round"/></svg>
<div class="a" style="left:296.1px;top:30px;width:13.2px;height:11.9px;background:#3d405e;border:1px solid #5d6192"></div>
<svg style="left:298.3px;top:32.1px" width="8.6" height="8.6" viewBox="0 0 10 10"><circle cx="5" cy="5" r="3.9" stroke="#c4c4d8" stroke-width="0" fill="#c4c4d8"/><path d="M2.2 2.6L7.4 7.8M3.8 1.6L8.6 6.4M1.4 4.2L5.8 8.6M7.8 2.6L2.6 7.8M6.2 1.6L1.4 6.4M8.6 4.2L4.2 8.6" stroke="#3e4263" stroke-width="0.45" fill="none" stroke-linecap="round" stroke-linejoin="round"/></svg>
<div class="a" style="left:309.2px;top:30px;width:13.2px;height:11.9px;background:#3d405e;border:1px solid #5d6192"></div>
<svg style="left:311.4px;top:32.1px" width="8.6" height="8.6" viewBox="0 0 10 10"><path d="M1.8 6.6A3.3 3.3 0 0 1 8.2 6.6Z" stroke="#d0d0e0" stroke-width="0.9" fill="none" stroke-linecap="round" stroke-linejoin="round"/><path d="M1 8.4H9" stroke="#d0d0e0" stroke-width="1.1" fill="none" stroke-linecap="round" stroke-linejoin="round"/><path d="M3.2 5.4H6.8" stroke="#d0d0e0" stroke-width="0.6" fill="none" stroke-linecap="round" stroke-linejoin="round"/></svg>
<svg style="left:324.0px;top:32.1px" width="8.6" height="8.6" viewBox="0 0 10 10"><path d="M3.2 8L5 2.6L6.8 8M3.9 6.2H6.1" stroke="#b8b8b8" stroke-width="0.9" fill="none" stroke-linecap="round" stroke-linejoin="round"/></svg>
<svg style="left:336.2px;top:32.1px" width="8.6" height="8.6" viewBox="0 0 10 10"><circle cx="5" cy="5" r="3.8" stroke="#e8e8e8" stroke-width="0.9" fill="none"/><path d="M6.8 3.2L5.6 5.6L3.2 6.8L4.4 4.4Z" fill="#e8e8e8"/></svg>
<div class="a" style="left:346.8px;top:30px;width:13.2px;height:11.9px;background:#3d405e;border:1px solid #5d6192"></div>
<svg style="left:349.0px;top:32.1px" width="8.6" height="8.6" viewBox="0 0 10 10"><circle cx="5" cy="5" r="3.8" stroke="#e8e8e8" stroke-width="0.9" fill="none"/><circle cx="5" cy="5" r="2.4" stroke="#e8e8e8" stroke-width="0.6" fill="#d0d0d0"/><path d="M3.4 3.4L6.6 6.6M6.6 3.4L3.4 6.6" stroke="#3d4566" stroke-width="0.5" fill="none" stroke-linecap="round" stroke-linejoin="round"/></svg>
<div class="a" style="left:359.9px;top:30px;width:13.2px;height:11.9px;background:#3d405e;border:1px solid #5d6192"></div>
<svg style="left:362.09999999999997px;top:32.1px" width="8.6" height="8.6" viewBox="0 0 10 10"><circle cx="5" cy="5" r="3.8" stroke="#e8e8e8" stroke-width="0.9" fill="none"/><path d="M2.4 2.4A3.7 3.7 0 0 0 7.6 7.6A4.6 4.6 0 0 1 2.4 2.4Z" fill="#e8e8e8"/><path d="M2.2 2.6L7.4 7.8L5 8.6L1.6 5.4Z" fill="#e8e8e8"/></svg>
<div class="a" style="left:372.9px;top:30px;width:13.2px;height:11.9px;background:#3d405e;border:1px solid #5d6192"></div>
<svg style="left:375.09999999999997px;top:32.1px" width="8.6" height="8.6" viewBox="0 0 10 10"><path d="M5 1.2Q8 5 7.4 7A2.5 2.5 0 0 1 2.6 7Q2 5 5 1.2Z" stroke="#e8e8e8" stroke-width="0.9" fill="none" stroke-linecap="round" stroke-linejoin="round"/></svg>
<div class="a" style="left:386.0px;top:30px;width:13.2px;height:11.9px;background:#3d405e;border:1px solid #5d6192"></div>
<svg style="left:388.2px;top:32.1px" width="8.6" height="8.6" viewBox="0 0 10 10"><path d="M3.6 1.4V7.6H2.4V8.8H6.8V7.6H5.6V1.4Z" stroke="#e8e8e8" stroke-width="0.8" fill="#c8c8ff" stroke-linecap="round" stroke-linejoin="round"/><path d="M6.8 2.4H7.8M6.8 4.4H7.8" stroke="#e8e8e8" stroke-width="0.6" fill="none" stroke-linecap="round" stroke-linejoin="round"/></svg>
<svg style="left:400.4px;top:32.1px" width="8.6" height="8.6" viewBox="0 0 10 10"><path d="M5 1.6L9 8.4H1Z" stroke="#e8e8e8" stroke-width="0.9" fill="none" stroke-linecap="round" stroke-linejoin="round"/></svg>
<svg style="left:413.5px;top:32.1px" width="8.6" height="8.6" viewBox="0 0 10 10"><path d="M1.2 1.8V8.6H8.8Z" stroke="#e8e8e8" stroke-width="0.9" fill="none" stroke-linecap="round" stroke-linejoin="round"/><path d="M3 5.4L6 8.2M1.4 3.4L3 3.4" stroke="#e8e8e8" stroke-width="0.6" fill="none" stroke-linecap="round" stroke-linejoin="round"/><path d="M5 4L8.6 7.4V8.6H7.4Z" fill="#e8e8e8"/></svg>
<svg style="left:426.0px;top:32.1px" width="8.6" height="8.6" viewBox="0 0 10 10"><path d="M4.4 1.4L7.8 2.8V6.6L4.4 8L1.2 6.6V2.8Z" stroke="#e8e8e8" stroke-width="0.8" fill="none" stroke-linecap="round" stroke-linejoin="round"/><path d="M1.2 2.8L4.4 4.2L7.8 2.8M4.4 4.2V8" stroke="#e8e8e8" stroke-width="0.6" fill="none" stroke-linecap="round" stroke-linejoin="round"/><circle cx="7" cy="7" r="2" stroke="#e8e8e8" stroke-width="0.7" fill="#3c3f41"/><path d="M5.4 7H8.6M7 5.2V8.8" stroke="#e8e8e8" stroke-width="0.4" fill="none" stroke-linecap="round" stroke-linejoin="round"/></svg>
<svg style="left:438.5px;top:32.1px" width="8.6" height="8.6" viewBox="0 0 10 10"><path d="M4.8 1.4L8.2 2.8V6.6L4.8 8.2L1.4 6.6V2.8Z" stroke="#e8e8e8" stroke-width="0.8" fill="none" stroke-linecap="round" stroke-linejoin="round"/><path d="M1.4 2.8L4.8 4.2L8.2 2.8M4.8 4.2V8.2" stroke="#e8e8e8" stroke-width="0.6" fill="none" stroke-linecap="round" stroke-linejoin="round"/><path d="M5.6 5.4L8.8 6.4V8.8L5.6 9Z" fill="#e8e8e8"/></svg>
<svg style="left:450.7px;top:32.1px" width="8.6" height="8.6" viewBox="0 0 10 10"><path d="M3 1.2L5.4 2.2V4.6L3 5.6L0.8 4.6V2.2Z" stroke="#e8e8e8" stroke-width="0.8" fill="none" stroke-linecap="round" stroke-linejoin="round"/><path d="M6.4 3L8.8 4V6.4L6.4 7.4L4.2 6.4V4Z" stroke="#e8e8e8" stroke-width="0.8" fill="#3c3f41" stroke-linecap="round" stroke-linejoin="round"/><path d="M3 5.4L5.2 6.4V8.6L3 9.4L0.8 8.6V6.4Z" stroke="#e8e8e8" stroke-width="0.8" fill="#3c3f41" stroke-linecap="round" stroke-linejoin="round"/></svg>
<div class="a" style="left:466px;top:31px;width:0.8px;height:11px;background:#484c4e;"></div>
<svg style="left:471.3px;top:32.1px" width="8.6" height="8.6" viewBox="0 0 10 10"><path d="M2 2H8V8H2Z" stroke="#5c6062" stroke-width="0.9" fill="none" stroke-linecap="round" stroke-linejoin="round"/><path d="M3.4 3.4L6.6 6.6M6.6 3.4L3.4 6.6" stroke="#5c6062" stroke-width="0.7" fill="none" stroke-linecap="round" stroke-linejoin="round"/></svg>
<div class="a" style="left:484px;top:31px;width:0.8px;height:11px;background:#484c4e;"></div>
<svg style="left:488.5px;top:32.1px" width="8.6" height="8.6" viewBox="0 0 10 10"><path d="M1.6 1.6H5.6V6.6H1.6Z" stroke="#5c6062" stroke-width="0.9" fill="none" stroke-linecap="round" stroke-linejoin="round"/><path d="M4.2 3.4H8.4V8.6H4.2Z" stroke="#5c6062" stroke-width="0.9" fill="none" stroke-linecap="round" stroke-linejoin="round"/></svg>
<svg style="left:502.0px;top:32.1px" width="8.6" height="8.6" viewBox="0 0 10 10"><path d="M2.4 2H7.6V8.6H2.4Z" stroke="#5c6062" stroke-width="0.9" fill="none" stroke-linecap="round" stroke-linejoin="round"/><path d="M3.8 1.4H6.2" stroke="#5c6062" stroke-width="0.9" fill="none" stroke-linecap="round" stroke-linejoin="round"/></svg>
<svg style="left:514.5px;top:32.1px" width="8.6" height="8.6" viewBox="0 0 10 10"><circle cx="5" cy="3.4" r="1.6" stroke="#5c6062" stroke-width="0.9" fill="none"/><path d="M5 5V6.6M1.6 8.4H8.4M2.4 8.4Q2.6 6.6 5 6.6Q7.4 6.6 7.6 8.4" stroke="#5c6062" stroke-width="0.9" fill="none" stroke-linecap="round" stroke-linejoin="round"/></svg>
<div class="a" style="left:527px;top:31px;width:0.8px;height:11px;background:#484c4e;"></div>
<svg style="left:531.0px;top:32.1px" width="8.6" height="8.6" viewBox="0 0 10 10"><path d="M1.6 4.2H8.4V8H1.6ZM3 4.2L4 2.2H6L7 4.2M3.8 4.2V8M6.2 4.2V8M1.6 6.2H8.4" stroke="#5c6062" stroke-width="0.7" fill="none" stroke-linecap="round" stroke-linejoin="round"/></svg>
<svg style="left:544.1px;top:32.1px" width="8.6" height="8.6" viewBox="0 0 10 10"><path d="M1.6 1.8H8.4M1.6 8.2H8.4M3.2 1.8V8.2M6.8 1.8V8.2M3.2 5H6.8" stroke="#5c6062" stroke-width="0.8" fill="none" stroke-linecap="round" stroke-linejoin="round"/></svg>
<div class="a" style="left:555px;top:30.5px;width:12px;height:11.5px;background:#484c4e;"></div>
<svg style="left:556.7px;top:32.1px" width="8.6" height="8.6" viewBox="0 0 10 10"><path d="M2 1.6V8.4M8 1.6V8.4M2 5L5 2.4L8 5M3.6 8.4L5 5.8L6.4 8.4" stroke="#5c6062" stroke-width="0.8" fill="none" stroke-linecap="round" stroke-linejoin="round"/></svg>
<div class="a" style="left:570.3px;top:31px;width:0.8px;height:11px;background:#484c4e;"></div>
<svg style="left:574.1px;top:32.1px" width="8.6" height="8.6" viewBox="0 0 10 10"><path d="M1 3H9V8.4H1Z" stroke="#e8e8e8" stroke-width="0.9" fill="none" stroke-linecap="round" stroke-linejoin="round"/><circle cx="5" cy="5.7" r="1.6" stroke="#e8e8e8" stroke-width="0.8" fill="none"/><path d="M3.4 2.8L4 1.8H6L6.6 2.8" stroke="#e8e8e8" stroke-width="0.8" fill="none" stroke-linecap="round" stroke-linejoin="round"/></svg>
<svg style="left:586.3000000000001px;top:32.1px" width="8.6" height="8.6" viewBox="0 0 10 10"><path d="M1.2 3.4H6.6V8H1.2Z" stroke="#e8e8e8" stroke-width="0.9" fill="#e8e8e8" stroke-linecap="round" stroke-linejoin="round"/><path d="M6.8 5L9.2 3.6V7.8L6.8 6.4Z" fill="#e8e8e8"/><path d="M2 2H4.6" stroke="#e8e8e8" stroke-width="1" fill="none" stroke-linecap="round" stroke-linejoin="round"/><circle cx="3.8" cy="5.7" r="1" stroke="#3c3f41" stroke-width="0" fill="#3c3f41"/></svg>
<svg style="left:599.7px;top:32.1px" width="8.6" height="8.6" viewBox="0 0 10 10"><path d="M2.6 2H7.4L9 4.2L5 8.8L1 4.2Z" stroke="#e8e8e8" stroke-width="0.8" fill="none" stroke-linecap="round" stroke-linejoin="round"/><path d="M1 4.2H9M3.6 4.2L5 8.6L6.4 4.2M3.6 4.2L2.6 2M6.4 4.2L7.4 2" stroke="#e8e8e8" stroke-width="0.5" fill="none" stroke-linecap="round" stroke-linejoin="round"/><path d="M3.8 4.4H6.2L5 8Z" fill="#e8e8e8"/></svg>
<svg style="left:612.3000000000001px;top:32.1px" width="8.6" height="8.6" viewBox="0 0 10 10"><path d="M1.2 5L4.4 2.2V7.8Z" fill="#e8e8e8"/><path d="M5 5L8.2 2.2V7.8Z" fill="#e8e8e8"/><path d="M8.8 3.4V6.6" stroke="#e8e8e8" stroke-width="0.8" fill="none" stroke-linecap="round" stroke-linejoin="round"/></svg>
<svg style="left:625.4000000000001px;top:32.1px" width="8.6" height="8.6" viewBox="0 0 10 10"><path d="M5 1.2L9 8.6H1Z" stroke="#e8e8e8" stroke-width="0.9" fill="none" stroke-linecap="round" stroke-linejoin="round"/><path d="M5 1.2V6.4L1 8.6M5 6.4L9 8.6" stroke="#e8e8e8" stroke-width="0.6" fill="none" stroke-linecap="round" stroke-linejoin="round"/></svg>
<svg style="left:637.9000000000001px;top:32.1px" width="8.6" height="8.6" viewBox="0 0 10 10"><path d="M5 1.2L8.6 3V7L5 8.8L1.4 7V3Z" stroke="#e8e8e8" stroke-width="0.9" fill="none" stroke-linecap="round" stroke-linejoin="round"/><path d="M1.4 3L5 4.8L8.6 3M5 4.8V8.8" stroke="#e8e8e8" stroke-width="0.7" fill="none" stroke-linecap="round" stroke-linejoin="round"/><path d="M5 4.8L8.6 3V7L5 8.8Z" fill="#bbb"/></svg>
<svg style="left:651.0px;top:32.1px" width="8.6" height="8.6" viewBox="0 0 10 10"><path d="M1.8 1.8H8.2V6L6 8.4H1.8Z" stroke="#e8e8e8" stroke-width="0.9" fill="none" stroke-linecap="round" stroke-linejoin="round"/><path d="M5.8 5.8H8.2L5.8 8.4Z" fill="#e8e8e8"/><path d="M4.4 3.4H6.2V5" stroke="#e8e8e8" stroke-width="0.7" fill="none" stroke-linecap="round" stroke-linejoin="round"/></svg>
<div class="a" style="left:663.5px;top:31px;width:0.8px;height:11px;background:#484c4e;"></div>
<svg style="left:668.2px;top:32.1px" width="8.6" height="8.6" viewBox="0 0 10 10"><circle cx="3.4" cy="3" r="1.2" stroke="#e8e8e8" stroke-width="0" fill="#e8e8e8"/><circle cx="6.8" cy="3" r="1.2" stroke="#e8e8e8" stroke-width="0" fill="#e8e8e8"/><path d="M1.4 8.4V5.8Q1.4 4.6 3.4 4.6Q5 4.6 5.1 5.6Q5.2 4.6 6.8 4.6Q8.8 4.6 8.8 5.8V8.4Z" fill="#e8e8e8"/></svg>
<svg style="left:680.7px;top:32.1px" width="8.6" height="8.6" viewBox="0 0 10 10"><path d="M2.6 1.8L8 5L2.6 8.2Z" stroke="#e8e8e8" stroke-width="0.9" fill="none" stroke-linecap="round" stroke-linejoin="round"/></svg>
<svg style="left:693.5px;top:32.1px" width="8.6" height="8.6" viewBox="0 0 10 10"><path d="M1.2 2.2L5 5L1.2 7.8Z" stroke="#e8e8e8" stroke-width="0.8" fill="none" stroke-linecap="round" stroke-linejoin="round"/><path d="M5 2.2L8.8 5L5 7.8Z" stroke="#e8e8e8" stroke-width="0.8" fill="none" stroke-linecap="round" stroke-linejoin="round"/></svg>
<svg style="left:460.8px;top:35.2px" width="2.6" height="1.8" viewBox="0 0 2.6 1.8"><path d="M0 0H2.6L1.3 1.8Z" fill="#dcdcdc"/></svg>
<div class="a" style="left:160.2px;top:67.5px;width:14.5px;height:180.5px;background:#3c3f41;"></div>
<div class="a" style="left:161.2px;top:77.2px;width:12.8px;height:10px;background:#3d405e;border:1px solid #5d6192"></div>
<svg style="left:163.0px;top:77.6px" width="9" height="9" viewBox="0 0 10 10"><path d="M0.4 1.6H9.6V8.4H0.4Z" stroke="#f0f0f0" stroke-width="0.9" fill="none" stroke-dasharray="1.3 0.8"/></svg>
<svg style="left:163.0px;top:89.7px" width="9" height="9" viewBox="0 0 10 10"><path d="M1.8 8.4L3.4 6.4" stroke="#e8e8e8" stroke-width="1.9" fill="none" stroke-linecap="round" stroke-linejoin="round"/><path d="M4.2 5.6L8.2 1.6" stroke="#e8e8e8" stroke-width="1.7" fill="none" stroke-linecap="round" stroke-linejoin="round"/></svg>
<svg style="left:163.0px;top:101.1px" width="9" height="9" viewBox="0 0 10 10"><path d="M1.6 8.4L5.4 4.6M4.2 3.4L6.6 5.8" stroke="#e8e8e8" stroke-width="0.9" fill="none" stroke-linecap="round" stroke-linejoin="round"/><path d="M5.6 4.4L8.2 1.8" stroke="#e8e8e8" stroke-width="1.5" fill="none" stroke-linecap="round" stroke-linejoin="round"/><path d="M1.4 8.6L2.6 8.2" stroke="#e8e8e8" stroke-width="1.2" fill="none" stroke-linecap="round" stroke-linejoin="round"/></svg>
<svg style="left:163.0px;top:112.9px" width="9" height="9" viewBox="0 0 10 10"><path d="M1.6 8.4L2.4 6L7 1.4L8.6 3L4 7.6Z" stroke="#e8e8e8" stroke-width="0.9" fill="none" stroke-linecap="round" stroke-linejoin="round"/><path d="M2.4 6L4 7.6" stroke="#e8e8e8" stroke-width="0.7" fill="none" stroke-linecap="round" stroke-linejoin="round"/></svg>
<svg style="left:163.0px;top:124.5px" width="9" height="9" viewBox="0 0 10 10"><path d="M1.2 8.6V6.8H8.8V8.6Z" fill="#e8e8e8"/><path d="M3.2 6.6L4.2 2.6H6.2L7 6.6" stroke="#e8e8e8" stroke-width="0.9" fill="none" stroke-linecap="round" stroke-linejoin="round"/><path d="M2.6 5.4L7.6 5.4" stroke="#e8e8e8" stroke-width="0.6" fill="none" stroke-linecap="round" stroke-linejoin="round"/></svg>
<svg style="left:163.0px;top:135.7px" width="9" height="9" viewBox="0 0 10 10"><path d="M5 1.2Q8 5 7.4 7A2.5 2.5 0 0 1 2.6 7Q2 5 5 1.2Z" stroke="#e8e8e8" stroke-width="0.9" fill="none" stroke-linecap="round" stroke-linejoin="round"/></svg>
<svg style="left:163.0px;top:150.8px" width="9" height="9" viewBox="0 0 10 10"><path d="M1.4 7.2L6 2L8.8 3.4L8.2 5.4L3.6 8.8Z" stroke="#e8e8e8" stroke-width="0.9" fill="none" stroke-linecap="round" stroke-linejoin="round"/><path d="M1.4 7.2L4.6 6.2L8.2 5.4M4.6 6.2L6 2" stroke="#e8e8e8" stroke-width="0.6" fill="none" stroke-linecap="round" stroke-linejoin="round"/></svg>
<svg style="left:163.0px;top:162.9px" width="9" height="9" viewBox="0 0 10 10"><path d="M2 7L4 2.6L8.2 3.6L7.4 7.6L3.6 8.6Z" stroke="#e8e8e8" stroke-width="0.9" fill="none" stroke-linecap="round" stroke-linejoin="round"/><path d="M2 7L5.6 6.4L7.4 7.6M5.6 6.4L4 2.6" stroke="#e8e8e8" stroke-width="0.5" fill="none" stroke-linecap="round" stroke-linejoin="round"/></svg>
<svg style="left:163.0px;top:174.9px" width="9" height="9" viewBox="0 0 10 10"><path d="M1.8 7.4L3.8 2.4L7.8 3.2L8.4 6.6L4.4 8.6Z" stroke="#e8e8e8" stroke-width="0.9" fill="none" stroke-linecap="round" stroke-linejoin="round"/><path d="M1.8 7.4L6 6L8.4 6.6M6 6L3.8 2.4" stroke="#e8e8e8" stroke-width="0.5" fill="none" stroke-linecap="round" stroke-linejoin="round"/></svg>
<svg style="left:163.0px;top:186.9px" width="9" height="9" viewBox="0 0 10 10"><path d="M1.6 4.6Q2.4 2.2 5.4 2.6L8.6 5.2L6.2 8L3 7.6Q1.4 6.6 1.6 4.6Z" stroke="#e8e8e8" stroke-width="0.9" fill="none" stroke-linecap="round" stroke-linejoin="round"/><path d="M3 7.6Q4.8 5.8 8.6 5.2" stroke="#e8e8e8" stroke-width="0.5" fill="none" stroke-linecap="round" stroke-linejoin="round"/></svg>
<svg style="left:163.0px;top:198.7px" width="9" height="9" viewBox="0 0 10 10"><path d="M1.8 6.6A3.2 3.2 0 0 1 8.2 6.6" stroke="#e8e8e8" stroke-width="0.9" fill="none" stroke-linecap="round" stroke-linejoin="round"/><path d="M1 6.8H9" stroke="#e8e8e8" stroke-width="0.9" fill="none" stroke-linecap="round" stroke-linejoin="round"/><path d="M3.6 8.4H6.4" stroke="#e8e8e8" stroke-width="0.9" fill="none" stroke-linecap="round" stroke-linejoin="round"/><path d="M5 3.4V6.6" stroke="#e8e8e8" stroke-width="0.5" fill="none" stroke-linecap="round" stroke-linejoin="round"/></svg>
<svg style="left:163.0px;top:210.5px" width="9" height="9" viewBox="0 0 10 10"><path d="M1.2 5.4L5 2L8.8 5.4L5 8.4Z" stroke="#e8e8e8" stroke-width="0.9" fill="none" stroke-linecap="round" stroke-linejoin="round"/><path d="M5 2V8.4M1.2 5.4H8.8" stroke="#e8e8e8" stroke-width="0.5" fill="none" stroke-linecap="round" stroke-linejoin="round"/></svg>
<svg style="left:163.0px;top:222.3px" width="9" height="9" viewBox="0 0 10 10"><path d="M1.6 5.6L5.4 2L8.6 4.2L5.4 8.4Z" stroke="#e8e8e8" stroke-width="0.9" fill="none" stroke-linecap="round" stroke-linejoin="round"/><path d="M3.6 5L6.8 6.2" stroke="#e8e8e8" stroke-width="0.6" fill="none" stroke-linecap="round" stroke-linejoin="round"/></svg>
<svg style="left:163.0px;top:236.5px" width="9" height="9" viewBox="0 0 10 10"><path d="M2 8L5.6 4.4" stroke="#e8e8e8" stroke-width="1.5" fill="none" stroke-linecap="round" stroke-linejoin="round"/><circle cx="6.8" cy="3.2" r="1.7" stroke="#e8e8e8" stroke-width="0" fill="#e8e8e8"/><path d="M6.6 2L8.8 0.6L9.4 1.2L8 3.4Z" fill="#3c3f41"/></svg>
<div class="a" style="left:152px;top:442.6px;width:717px;height:99px;background:#3c3f41;"></div>
<div class="t " style="left:155px;top:445.55442972972975px;font-size:6.7px;color:#b4b4b4;word-spacing:-0.32px">Rooms: 1&nbsp; Objects: 0 / 0&nbsp; Statics: 0 / 0&nbsp; Triggers: 0 / 0&nbsp; Lights: 0 / 0&nbsp; Cameras: 0 / 0&nbsp; Flybys: 0 / 0</div>
<div class="t " style="left:155px;top:452.25442972972974px;font-size:6.7px;color:#b4b4b4;">Room vertices / faces: 0 / 0. Last level output: compile level</div>
<div class="hdr" style="left:152px;top:462.4px;width:198px;height:12.4px"></div>
<div class="t " style="left:154px;top:465.4px;">Lighting</div>
<svg style="left:342px;top:466.59999999999997px" width="4" height="4" viewBox="0 0 4 4"><path d="M0.5 0.5L3.5 3.5M3.5 0.5L0.5 3.5" stroke="#7a7e80" stroke-width="0.7"/></svg>
<div class="a" style="left:350px;top:462.4px;width:1px;height:78.6px;background:#36393b;"></div>
<div class="hdr" style="left:351px;top:462.4px;width:518px;height:12.4px"></div>
<div class="t " style="left:353px;top:465.4px;">Palette</div>
<svg style="left:861px;top:466.59999999999997px" width="4" height="4" viewBox="0 0 4 4"><path d="M0.5 0.5L3.5 3.5M3.5 0.5L0.5 3.5" stroke="#7a7e80" stroke-width="0.7"/></svg>
<div class="cmb" style="left:154.3px;top:476.4px;width:60.8px;height:11.6px"></div>
<div class="t " style="left:157.3px;top:479.9px;">Point</div>
<svg style="left:206.60000000000002px;top:481.0px" width="5" height="3" viewBox="0 0 5 3"><path d="M0 0H5L2.5 3Z" fill="#dcdcdc"/></svg>
<div class="btn" style="left:218.2px;top:476.4px;width:12.6px;height:11.6px;background:#424648"></div>
<svg style="left:220.5px;top:478.2px" width="8" height="8" viewBox="0 0 10 10"><path d="M5 1V9M1 5H9" stroke="#e6e6e6" stroke-width="1.3" fill="none" stroke-linecap="round" stroke-linejoin="round"/></svg>
<div class="inpd" style="left:154.3px;top:492px;width:76.5px;height:11.7px"></div>
<div class="t " style="left:157.3px;top:495.54999999999995px;color:#74787a;">Default quality</div>
<svg style="left:222.3px;top:496.65000000000003px" width="5" height="3" viewBox="0 0 5 3"><path d="M0 0H5L2.5 3Z" fill="#dcdcdc"/></svg>
<div class="cbd" style="left:155px;top:507.0px"></div>
<div class="t " style="left:165px;top:508.4px;color:#909496;">Enabled</div>
<div class="cbd" style="left:195.3px;top:507.0px"></div>
<div class="t " style="left:205.3px;top:508.4px;color:#909496;">Static</div>
<div class="cbd" style="left:155px;top:517.2px"></div>
<div class="t " style="left:165px;top:518.6px;color:#909496;">Obstruct</div>
<div class="cbd" style="left:195.3px;top:517.2px"></div>
<div class="t " style="left:205.3px;top:518.6px;color:#909496;">Dynamic</div>
<div class="cbd" style="left:155px;top:527.4px"></div>
<div class="t " style="left:165px;top:528.8px;color:#909496;">Shadow</div>
<div class="cbd" style="left:195.3px;top:527.4px"></div>
<div class="t " style="left:205.3px;top:528.8px;color:#909496;">Imported</div>
<div class="t  tr" style="left:60.60000000000002px;top:479.7px;width:200px;text-align:right;">Color</div>
<div class="inp" style="left:263.7px;top:476.4px;width:30.8px;height:11.2px;background:#3f4244"></div>
<div class="t  tr" style="left:60.60000000000002px;top:495.5px;width:200px;text-align:right;">Intensity</div>
<div class="inpd" style="left:263.7px;top:492px;width:30.8px;height:11.7px"></div>
<div class="t  tr" style="left:85.5px;top:495.54999999999995px;width:200px;text-align:right;color:#6f7375;">0.00</div>
<svg style="left:288.6px;top:492px" width="3.2" height="11.7" viewBox="0 0 3.2 11.7"><path d="M0 4.25L1.6 2.45L3.2 4.25Z M0 7.45L1.6 9.25L3.2 7.45Z" fill="#d8d8d8"/></svg>
<div class="t  tr" style="left:60.60000000000002px;top:510.7px;width:200px;text-align:right;">In d</div>
<div class="inpd" style="left:263.7px;top:507.5px;width:30.8px;height:11.5px"></div>
<div class="t  tr" style="left:85.5px;top:510.95px;width:200px;text-align:right;color:#6f7375;">0.00</div>
<svg style="left:288.6px;top:507.5px" width="3.2" height="11.5" viewBox="0 0 3.2 11.5"><path d="M0 4.15L1.6 2.35L3.2 4.15Z M0 7.35L1.6 9.15L3.2 7.35Z" fill="#d8d8d8"/></svg>
<div class="t  tr" style="left:60.60000000000002px;top:526.3px;width:200px;text-align:right;">Out d</div>
<div class="inpd" style="left:263.7px;top:523.1px;width:30.8px;height:11.5px"></div>
<div class="t  tr" style="left:85.5px;top:526.55px;width:200px;text-align:right;color:#6f7375;">0.00</div>
<svg style="left:288.6px;top:523.1px" width="3.2" height="11.5" viewBox="0 0 3.2 11.5"><path d="M0 4.15L1.6 2.35L3.2 4.15Z M0 7.35L1.6 9.15L3.2 7.35Z" fill="#d8d8d8"/></svg>
<div class="t  tr" style="left:114px;top:479.69999999999993px;width:200px;text-align:right;">In &sigma;</div>
<div class="inpd" style="left:316.4px;top:476.4px;width:30.8px;height:11.6px"></div>
<div class="t  tr" style="left:138.2px;top:479.9px;width:200px;text-align:right;color:#6f7375;">0.00</div>
<svg style="left:341.3px;top:476.4px" width="3.2" height="11.6" viewBox="0 0 3.2 11.6"><path d="M0 4.20L1.6 2.40L3.2 4.20Z M0 7.40L1.6 9.20L3.2 7.40Z" fill="#d8d8d8"/></svg>
<div class="t  tr" style="left:114px;top:495.29999999999995px;width:200px;text-align:right;">Out &sigma;</div>
<div class="inpd" style="left:316.4px;top:492px;width:30.8px;height:11.6px"></div>
<div class="t  tr" style="left:138.2px;top:495.5px;width:200px;text-align:right;color:#6f7375;">0.00</div>
<svg style="left:341.3px;top:492px" width="3.2" height="11.6" viewBox="0 0 3.2 11.6"><path d="M0 4.20L1.6 2.40L3.2 4.20Z M0 7.40L1.6 9.20L3.2 7.40Z" fill="#d8d8d8"/></svg>
<div class="t  tr" style="left:114px;top:510.79999999999995px;width:200px;text-align:right;">Dir Y</div>
<div class="inpd" style="left:316.4px;top:507.5px;width:30.8px;height:11.6px"></div>
<div class="t  tr" style="left:138.2px;top:511.0px;width:200px;text-align:right;color:#6f7375;">0.00</div>
<svg style="left:341.3px;top:507.5px" width="3.2" height="11.6" viewBox="0 0 3.2 11.6"><path d="M0 4.20L1.6 2.40L3.2 4.20Z M0 7.40L1.6 9.20L3.2 7.40Z" fill="#d8d8d8"/></svg>
<div class="t  tr" style="left:114px;top:526.4px;width:200px;text-align:right;">Dir X</div>
<div class="inpd" style="left:316.4px;top:523.1px;width:30.8px;height:11.6px"></div>
<div class="t  tr" style="left:138.2px;top:526.6px;width:200px;text-align:right;color:#6f7375;">0.00</div>
<svg style="left:341.3px;top:523.1px" width="3.2" height="11.6" viewBox="0 0 3.2 11.6"><path d="M0 4.20L1.6 2.40L3.2 4.20Z M0 7.40L1.6 9.20L3.2 7.40Z" fill="#d8d8d8"/></svg>
<div class="btn" style="left:352.2px;top:476.8px;width:12.6px;height:11.8px;background:#424648"></div>
<svg style="left:354.5px;top:478.7px" width="8" height="8" viewBox="0 0 10 10"><path d="M8.3 4.4A3.4 3.4 0 0 0 2.4 2.8M1.7 5.6A3.4 3.4 0 0 0 7.6 7.2" stroke="#e6e6e6" stroke-width="1.15" fill="none" stroke-linecap="round" stroke-linejoin="round"/><path d="M0.9 1.6L1.5 4.6L4.2 3.2Z" fill="#e6e6e6"/><path d="M9.1 8.4L8.5 5.4L5.8 6.8Z" fill="#e6e6e6"/></svg>
<div class="btn" style="left:352.2px;top:492px;width:12.6px;height:11.8px;background:#424648"></div>
<svg style="left:354.5px;top:493.9px" width="8" height="8" viewBox="0 0 10 10"><circle cx="5" cy="5" r="3.6" stroke="#e6e6e6" stroke-width="0.9" fill="none"/><path d="M2.4 3.2Q4 4.4 3.6 6L4.8 8.2M6 1.8Q5.4 3.4 7 4L8.4 4M6.4 8Q6 6.4 7.4 6" stroke="#e6e6e6" stroke-width="0.7" fill="none" stroke-linecap="round" stroke-linejoin="round"/></svg>
<div class="btn" style="left:352.2px;top:507.5px;width:12.6px;height:11.8px;background:#424648"></div>
<svg style="left:354.5px;top:509.4px" width="8" height="8" viewBox="0 0 10 10"><path d="M1.3 8.7L2 6.2L6.9 1.3L8.7 3.1L3.8 8Z" stroke="#e6e6e6" stroke-width="1.0" fill="none" stroke-linecap="round" stroke-linejoin="round"/><path d="M5.9 2.3L7.7 4.1" stroke="#e6e6e6" stroke-width="0.8" fill="none" stroke-linecap="round" stroke-linejoin="round"/></svg>
<svg style="left:368.1px;top:476.4px" width="498.0" height="58.9" viewBox="0 0 498.02 58.91"><defs><linearGradient id="g1" gradientUnits="userSpaceOnUse" x1="2.7" y1="0" x2="168.7" y2="0"><stop offset="0" stop-color="#000000"/><stop offset="1" stop-color="#ffffff"/></linearGradient><linearGradient id="g2" gradientUnits="userSpaceOnUse" x1="174.0" y1="0" x2="340.0" y2="0"><stop offset="0" stop-color="#000000"/><stop offset="1" stop-color="#ff0000"/></linearGradient><linearGradient id="g3" gradientUnits="userSpaceOnUse" x1="345.4" y1="0" x2="495.3" y2="0"><stop offset="0" stop-color="#000000"/><stop offset="1" stop-color="#09c209"/></linearGradient><linearGradient id="g4" gradientUnits="userSpaceOnUse" x1="2.7" y1="0" x2="13.4" y2="0"><stop offset="0" stop-color="#09c909"/><stop offset="1" stop-color="#0ad70a"/></linearGradient><linearGradient id="g5" gradientUnits="userSpaceOnUse" x1="18.7" y1="0" x2="184.7" y2="0"><stop offset="0" stop-color="#000000"/><stop offset="1" stop-color="#0000ff"/></linearGradient><linearGradient id="g6" gradientUnits="userSpaceOnUse" x1="190.1" y1="0" x2="356.1" y2="0"><stop offset="0" stop-color="#000000"/><stop offset="1" stop-color="#ffff00"/></linearGradient><linearGradient id="g7" gradientUnits="userSpaceOnUse" x1="361.5" y1="0" x2="495.3" y2="0"><stop offset="0" stop-color="#000000"/><stop offset="1" stop-color="#00cece"/></linearGradient><linearGradient id="g8" gradientUnits="userSpaceOnUse" x1="2.7" y1="0" x2="29.5" y2="0"><stop offset="0" stop-color="#00d6d6"/><stop offset="1" stop-color="#00ffff"/></linearGradient><linearGradient id="g9" gradientUnits="userSpaceOnUse" x1="34.8" y1="0" x2="200.8" y2="0"><stop offset="0" stop-color="#000000"/><stop offset="1" stop-color="#ff00ff"/></linearGradient><linearGradient id="g10" gradientUnits="userSpaceOnUse" x1="206.2" y1="0" x2="372.2" y2="0"><stop offset="0" stop-color="#ff0000"/><stop offset="1" stop-color="#0ad70a"/></linearGradient><linearGradient id="g11" gradientUnits="userSpaceOnUse" x1="377.5" y1="0" x2="495.3" y2="0"><stop offset="0" stop-color="#ff0000"/><stop offset="1" stop-color="#4a00b5"/></linearGradient><linearGradient id="g12" gradientUnits="userSpaceOnUse" x1="2.7" y1="0" x2="45.5" y2="0"><stop offset="0" stop-color="#4200bd"/><stop offset="1" stop-color="#0000ff"/></linearGradient><linearGradient id="g13" gradientUnits="userSpaceOnUse" x1="50.9" y1="0" x2="216.9" y2="0"><stop offset="0" stop-color="#ff0000"/><stop offset="1" stop-color="#ffff00"/></linearGradient><linearGradient id="g14" gradientUnits="userSpaceOnUse" x1="222.2" y1="0" x2="388.2" y2="0"><stop offset="0" stop-color="#ff0000"/><stop offset="1" stop-color="#00ffff"/></linearGradient><linearGradient id="g15" gradientUnits="userSpaceOnUse" x1="393.6" y1="0" x2="495.3" y2="0"><stop offset="0" stop-color="#ff0000"/><stop offset="1" stop-color="#ff009c"/></linearGradient><linearGradient id="g16" gradientUnits="userSpaceOnUse" x1="2.7" y1="0" x2="61.6" y2="0"><stop offset="0" stop-color="#ff00a5"/><stop offset="1" stop-color="#ff00ff"/></linearGradient><linearGradient id="g17" gradientUnits="userSpaceOnUse" x1="66.9" y1="0" x2="232.9" y2="0"><stop offset="0" stop-color="#009600"/><stop offset="1" stop-color="#ffff00"/></linearGradient><linearGradient id="g18" gradientUnits="userSpaceOnUse" x1="238.3" y1="0" x2="404.3" y2="0"><stop offset="0" stop-color="#009600"/><stop offset="1" stop-color="#00ffff"/></linearGradient><linearGradient id="g19" gradientUnits="userSpaceOnUse" x1="409.7" y1="0" x2="495.3" y2="0"><stop offset="0" stop-color="#0000ff"/><stop offset="1" stop-color="#84847b"/></linearGradient><linearGradient id="g20" gradientUnits="userSpaceOnUse" x1="2.7" y1="0" x2="77.6" y2="0"><stop offset="0" stop-color="#8c8c73"/><stop offset="1" stop-color="#ffff00"/></linearGradient><linearGradient id="g21" gradientUnits="userSpaceOnUse" x1="83.0" y1="0" x2="249.0" y2="0"><stop offset="0" stop-color="#0000ff"/><stop offset="1" stop-color="#00ffff"/></linearGradient><linearGradient id="g22" gradientUnits="userSpaceOnUse" x1="254.4" y1="0" x2="420.4" y2="0"><stop offset="0" stop-color="#0000ff"/><stop offset="1" stop-color="#ff00ff"/></linearGradient><linearGradient id="g23" gradientUnits="userSpaceOnUse" x1="425.7" y1="0" x2="495.3" y2="0"><stop offset="0" stop-color="#ffff00"/><stop offset="1" stop-color="#94ff6b"/></linearGradient><linearGradient id="g24" gradientUnits="userSpaceOnUse" x1="2.7" y1="0" x2="93.7" y2="0"><stop offset="0" stop-color="#8cff73"/><stop offset="1" stop-color="#00ffff"/></linearGradient><linearGradient id="g25" gradientUnits="userSpaceOnUse" x1="99.1" y1="0" x2="265.1" y2="0"><stop offset="0" stop-color="#ffff00"/><stop offset="1" stop-color="#ff00ff"/></linearGradient><linearGradient id="g26" gradientUnits="userSpaceOnUse" x1="270.4" y1="0" x2="436.4" y2="0"><stop offset="0" stop-color="#00ffff"/><stop offset="1" stop-color="#ff00ff"/></linearGradient></defs><rect x="0" y="0" width="498.02" height="58.91" fill="#44484a"/><rect x="0.00" y="0.00" width="171.36" height="5.36" fill="url(#g1)"/><rect x="171.36" y="0.00" width="171.36" height="5.36" fill="url(#g2)"/><rect x="342.72" y="0.00" width="155.30" height="5.36" fill="url(#g3)"/><rect x="0.00" y="5.36" width="16.07" height="5.36" fill="url(#g4)"/><rect x="16.07" y="5.36" width="171.36" height="5.36" fill="url(#g5)"/><rect x="187.43" y="5.36" width="171.36" height="5.36" fill="url(#g6)"/><rect x="358.79" y="5.36" width="139.23" height="5.36" fill="url(#g7)"/><rect x="0.00" y="10.71" width="32.13" height="5.36" fill="url(#g8)"/><rect x="32.13" y="10.71" width="171.36" height="5.36" fill="url(#g9)"/><rect x="203.49" y="10.71" width="171.36" height="5.36" fill="url(#g10)"/><rect x="374.85" y="10.71" width="123.17" height="5.36" fill="url(#g11)"/><rect x="0.00" y="16.07" width="48.20" height="5.36" fill="url(#g12)"/><rect x="48.20" y="16.07" width="171.36" height="5.36" fill="url(#g13)"/><rect x="219.56" y="16.07" width="171.36" height="5.36" fill="url(#g14)"/><rect x="390.92" y="16.07" width="107.10" height="5.36" fill="url(#g15)"/><rect x="0.00" y="21.42" width="64.26" height="5.36" fill="url(#g16)"/><rect x="64.26" y="21.42" width="171.36" height="5.36" fill="url(#g17)"/><rect x="235.62" y="21.42" width="171.36" height="5.36" fill="url(#g18)"/><rect x="406.98" y="21.42" width="91.04" height="5.36" fill="url(#g19)"/><rect x="0.00" y="26.78" width="80.33" height="5.36" fill="url(#g20)"/><rect x="80.33" y="26.78" width="171.36" height="5.36" fill="url(#g21)"/><rect x="251.69" y="26.78" width="171.36" height="5.36" fill="url(#g22)"/><rect x="423.05" y="26.78" width="74.97" height="5.36" fill="url(#g23)"/><rect x="0.00" y="32.13" width="96.39" height="5.36" fill="url(#g24)"/><rect x="96.39" y="32.13" width="171.36" height="5.36" fill="url(#g25)"/><rect x="267.75" y="32.13" width="171.36" height="5.36" fill="url(#g26)"/><path d="M0.00 0V58.91M5.36 0V58.91M10.71 0V58.91M16.07 0V58.91M21.42 0V58.91M26.78 0V58.91M32.13 0V58.91M37.48 0V58.91M42.84 0V58.91M48.20 0V58.91M53.55 0V58.91M58.91 0V58.91M64.26 0V58.91M69.62 0V58.91M74.97 0V58.91M80.33 0V58.91M85.68 0V58.91M91.04 0V58.91M96.39 0V58.91M101.75 0V58.91M107.10 0V58.91M112.46 0V58.91M117.81 0V58.91M123.17 0V58.91M128.52 0V58.91M133.88 0V58.91M139.23 0V58.91M144.59 0V58.91M149.94 0V58.91M155.30 0V58.91M160.65 0V58.91M166.01 0V58.91M171.36 0V58.91M176.72 0V58.91M182.07 0V58.91M187.43 0V58.91M192.78 0V58.91M198.14 0V58.91M203.49 0V58.91M208.85 0V58.91M214.20 0V58.91M219.56 0V58.91M224.91 0V58.91M230.27 0V58.91M235.62 0V58.91M240.98 0V58.91M246.33 0V58.91M251.69 0V58.91M257.04 0V58.91M262.40 0V58.91M267.75 0V58.91M273.11 0V58.91M278.46 0V58.91M283.81 0V58.91M289.17 0V58.91M294.53 0V58.91M299.88 0V58.91M305.24 0V58.91M310.59 0V58.91M315.95 0V58.91M321.30 0V58.91M326.66 0V58.91M332.01 0V58.91M337.37 0V58.91M342.72 0V58.91M348.08 0V58.91M353.43 0V58.91M358.79 0V58.91M364.14 0V58.91M369.50 0V58.91M374.85 0V58.91M380.21 0V58.91M385.56 0V58.91M390.92 0V58.91M396.27 0V58.91M401.63 0V58.91M406.98 0V58.91M412.34 0V58.91M417.69 0V58.91M423.05 0V58.91M428.40 0V58.91M433.76 0V58.91M439.11 0V58.91M444.47 0V58.91M449.82 0V58.91M455.18 0V58.91M460.53 0V58.91M465.89 0V58.91M471.24 0V58.91M476.60 0V58.91M481.95 0V58.91M487.31 0V58.91M492.66 0V58.91M498.02 0V58.91M0 0.00H498.02M0 5.36H498.02M0 10.71H498.02M0 16.07H498.02M0 21.42H498.02M0 26.78H498.02M0 32.13H498.02M0 37.48H498.02M0 42.84H498.02M0 48.20H498.02M0 53.55H498.02M0 58.91H498.02" stroke="#1c1e20" stroke-width="0.8" fill="none" opacity="0.68"/></svg>
<div class="a" style="left:0px;top:540.5px;width:1024px;height:9.5px;background:#3c3f41;"></div>
<div class="t " style="left:2px;top:544.0564101351351px;font-size:6.65px;">Selected room: Name = Room 0 | Size = 18 x 18 | Pos = (0, 0, 0) | Floor = 0 | Ceiling = 12</div>
<div class="t " style="left:252.6px;top:544.0564101351351px;font-size:6.65px;">Global area: None</div>
<div class="t " style="left:311.7px;top:544.0564101351351px;font-size:6.65px;">Local area: None</div>
<div class="a" style="left:869px;top:29px;width:1.2px;height:14.3px;background:#35383a;"></div>
<div class="a" style="left:869.2px;top:43.3px;width:0.9px;height:498px;background:#4a4e50;"></div>
<div class="a" style="left:870.2px;top:29px;width:154px;height:512px;background:#3c3f41;"></div>
<div class="hdr" style="left:870.2px;top:29px;width:154px;height:12px"></div>
<div class="t " style="left:872.2px;top:31.8px;">Texturing</div>
<svg style="left:1016.2px;top:33.0px" width="4" height="4" viewBox="0 0 4 4"><path d="M0.5 0.5L3.5 3.5M3.5 0.5L0.5 3.5" stroke="#7a7e80" stroke-width="0.7"/></svg>
<div class="cmb" style="left:871.2px;top:43.6px;width:90px;height:12.2px"></div>
<svg style="left:952.7px;top:48.5px" width="5" height="3" viewBox="0 0 5 3"><path d="M0 0H5L2.5 3Z" fill="#dcdcdc"/></svg>
<div class="btn" style="left:962.7px;top:43.6px;width:12.2px;height:12.2px;background:#424648"></div>
<svg style="left:964.8000000000001px;top:45.7px" width="8" height="8" viewBox="0 0 10 10"><circle cx="6" cy="4" r="2.6" stroke="#e6e6e6" stroke-width="1.1" fill="none"/><path d="M4 6L1.3 8.8" stroke="#e6e6e6" stroke-width="1.3" fill="none" stroke-linecap="round" stroke-linejoin="round"/></svg>
<div class="btn" style="left:977.6px;top:43.6px;width:12.2px;height:12.2px;background:#424648"></div>
<svg style="left:979.7px;top:45.7px" width="8" height="8" viewBox="0 0 10 10"><path d="M5 1V9M1 5H9" stroke="#e6e6e6" stroke-width="1.3" fill="none" stroke-linecap="round" stroke-linejoin="round"/></svg>
<div class="btn" style="left:992px;top:43.6px;width:13px;height:12.2px;background:#424648"></div>
<svg style="left:994.5px;top:45.7px" width="8" height="8" viewBox="0 0 10 10"><path d="M8.3 4.4A3.4 3.4 0 0 0 2.4 2.8M1.7 5.6A3.4 3.4 0 0 0 7.6 7.2" stroke="#e6e6e6" stroke-width="1.15" fill="none" stroke-linecap="round" stroke-linejoin="round"/><path d="M0.9 1.6L1.5 4.6L4.2 3.2Z" fill="#e6e6e6"/><path d="M9.1 8.4L8.5 5.4L5.8 6.8Z" fill="#e6e6e6"/></svg>
<div class="btn" style="left:1007.6px;top:43.6px;width:13px;height:12.2px;background:#424648"></div>
<svg style="left:1010.1px;top:45.7px" width="8" height="8" viewBox="0 0 10 10"><path d="M2.3 3.3H7.7V8.4Q7.7 9.2 6.9 9.2H3.1Q2.3 9.2 2.3 8.4Z" fill="#e6e6e6"/><path d="M1.7 2.3H8.3" stroke="#e6e6e6" stroke-width="1.0" fill="none" stroke-linecap="round" stroke-linejoin="round"/><path d="M3.9 1.2H6.1" stroke="#e6e6e6" stroke-width="1.0" fill="none" stroke-linecap="round" stroke-linejoin="round"/><path d="M4 4.4V7.8M6 4.4V7.8" stroke="#45494a" stroke-width="0.7" fill="none" stroke-linecap="round" stroke-linejoin="round"/></svg>
<div class="lst" style="left:871.4px;top:58px;width:149.2px;height:449px;border-color:#50555a"></div>
<div class="a" style="left:872.4px;top:59px;width:139.8px;height:439.8px;border-right:1px solid #4d5254;border-bottom:1px solid #4d5254"></div>
<div class="t  tc" style="left:841.8px;top:274.2583905405405px;width:200px;text-align:center;font-size:6.59px;color:#c4c4c4;">Click here to load new texture file.</div>
<div class="btn" style="left:871.8px;top:509.6px;width:11.7px;height:12px;background:#424648"></div>
<svg style="left:873.3499999999999px;top:511.3px" width="8.6" height="8.6" viewBox="0 0 10 10"><circle cx="5" cy="5" r="4.2" fill="#e6e6e6"/><path d="M5 2.6V7.4M2.6 5H7.4" stroke="#3c3f41" stroke-width="1.2" fill="none" stroke-linecap="round" stroke-linejoin="round"/></svg>
<div class="cmb" style="left:886px;top:509.6px;width:59px;height:12px"></div>
<div class="t " style="left:889px;top:513.3px;">Normal</div>
<svg style="left:936.5px;top:514.4px" width="5" height="3" viewBox="0 0 5 3"><path d="M0 0H5L2.5 3Z" fill="#dcdcdc"/></svg>
<div class="btn" style="left:947.4px;top:509.6px;width:12px;height:12px;background:#424648"></div>
<svg style="left:949.4px;top:511.6px" width="8" height="8" viewBox="0 0 10 10"><path d="M2.2 5A3.1 3.1 0 1 1 3.2 7.4" stroke="#e6e6e6" stroke-width="1.0" fill="none" stroke-linecap="round" stroke-linejoin="round"/><path d="M0.6 3.6L3.8 3.8L2.2 6.3Z" fill="#e6e6e6"/></svg>
<div class="btn" style="left:962.2px;top:509.6px;width:11.6px;height:12px;background:#424648"></div>
<svg style="left:964.0px;top:511.6px" width="8" height="8" viewBox="0 0 10 10"><path d="M4.4 1.2V8.6H0.8Z" stroke="#e6e6e6" stroke-width="0.8" fill="none" stroke-linecap="round" stroke-linejoin="round"/><path d="M5.6 1.2V8.6H9.2Z" fill="#e6e6e6"/></svg>
<div class="cmb" style="left:977px;top:509.6px;width:43.4px;height:12px"></div>
<div class="t " style="left:980px;top:513.3px;">64</div>
<svg style="left:1011.9px;top:514.4px" width="5" height="3" viewBox="0 0 5 3"><path d="M0 0H5L2.5 3Z" fill="#dcdcdc"/></svg>
<div class="btn" style="left:871.8px;top:523.9px;width:47.8px;height:11.8px;background:#424648"></div>
<div class="t  tc" style="left:795.6999999999999px;top:527.6px;width:200px;text-align:center;color:#9a9a9a;">Animations</div>
<div class="btn" style="left:922.5px;top:523.9px;width:47.8px;height:11.8px;background:#424648"></div>
<div class="t  tc" style="left:846.4px;top:527.6px;width:200px;text-align:center;color:#9a9a9a;">Sounds</div>
<div class="btn" style="left:973px;top:523.9px;width:47.4px;height:11.8px;background:#424648"></div>
<div class="t  tc" style="left:896.7px;top:527.6px;width:200px;text-align:center;color:#9a9a9a;">Bumpmaps</div>
<div class="inp" style="left:901.3px;top:14.1px;width:106px;height:11.6px"></div>
<svg style="left:1011.4px;top:15.2px" width="8.8" height="8.8" viewBox="0 0 10 10"><circle cx="6" cy="4" r="2.6" stroke="#e6e6e6" stroke-width="1.1" fill="none"/><path d="M4 6L1.3 8.8" stroke="#e6e6e6" stroke-width="1.3" fill="none" stroke-linecap="round" stroke-linejoin="round"/></svg>
<div class="a" style="left:998.6px;top:0px;width:23.4px;height:9.3px;background:#d14a50;"></div>
<svg style="left:1008.2px;top:2px" width="5" height="5" viewBox="0 0 5 5"><path d="M0.5 0.5L4.5 4.5M4.5 0.5L0.5 4.5" stroke="#fff" stroke-width="1.1"/></svg>
<div class="a" style="left:975.4px;top:5.6px;width:4px;height:1.1px;background:#5a2a2a;"></div>
<svg style="left:988px;top:1.4px" width="6" height="6" viewBox="0 0 6 6"><path d="M0.5 1.8H4.2V5.4H0.5Z" stroke="#5a2a2a" stroke-width="0.9" fill="none"/><path d="M1.8 1.6V0.5H5.5V4.1H4.4" stroke="#5a2a2a" stroke-width="0.9" fill="none"/></svg>
<div class="t  ns" style="left:212px;top:344.4px;font-size:24px;color:#e9242e;letter-spacing:0.8px">Wad</div>
<div class="t  ns" style="left:736.4px;top:239px;font-size:24px;color:#e9242e;letter-spacing:0.55px">Textures</div>
<svg style="left:0;top:0" width="1024" height="550" viewBox="0 0 1024 550"><path d="M127.3 357.2L161.4 343.3V349.6H197.1V364.9H161.4V371.5Z" stroke="#e9242e" stroke-width="3.6" fill="none" stroke-linejoin="round"/><path d="M924 252.6L883.8 235.5V244.5H842.5V261H883.8V270.6Z" stroke="#e9242e" stroke-width="3.7" fill="none" stroke-linejoin="round"/></svg>
</div></body></html>
